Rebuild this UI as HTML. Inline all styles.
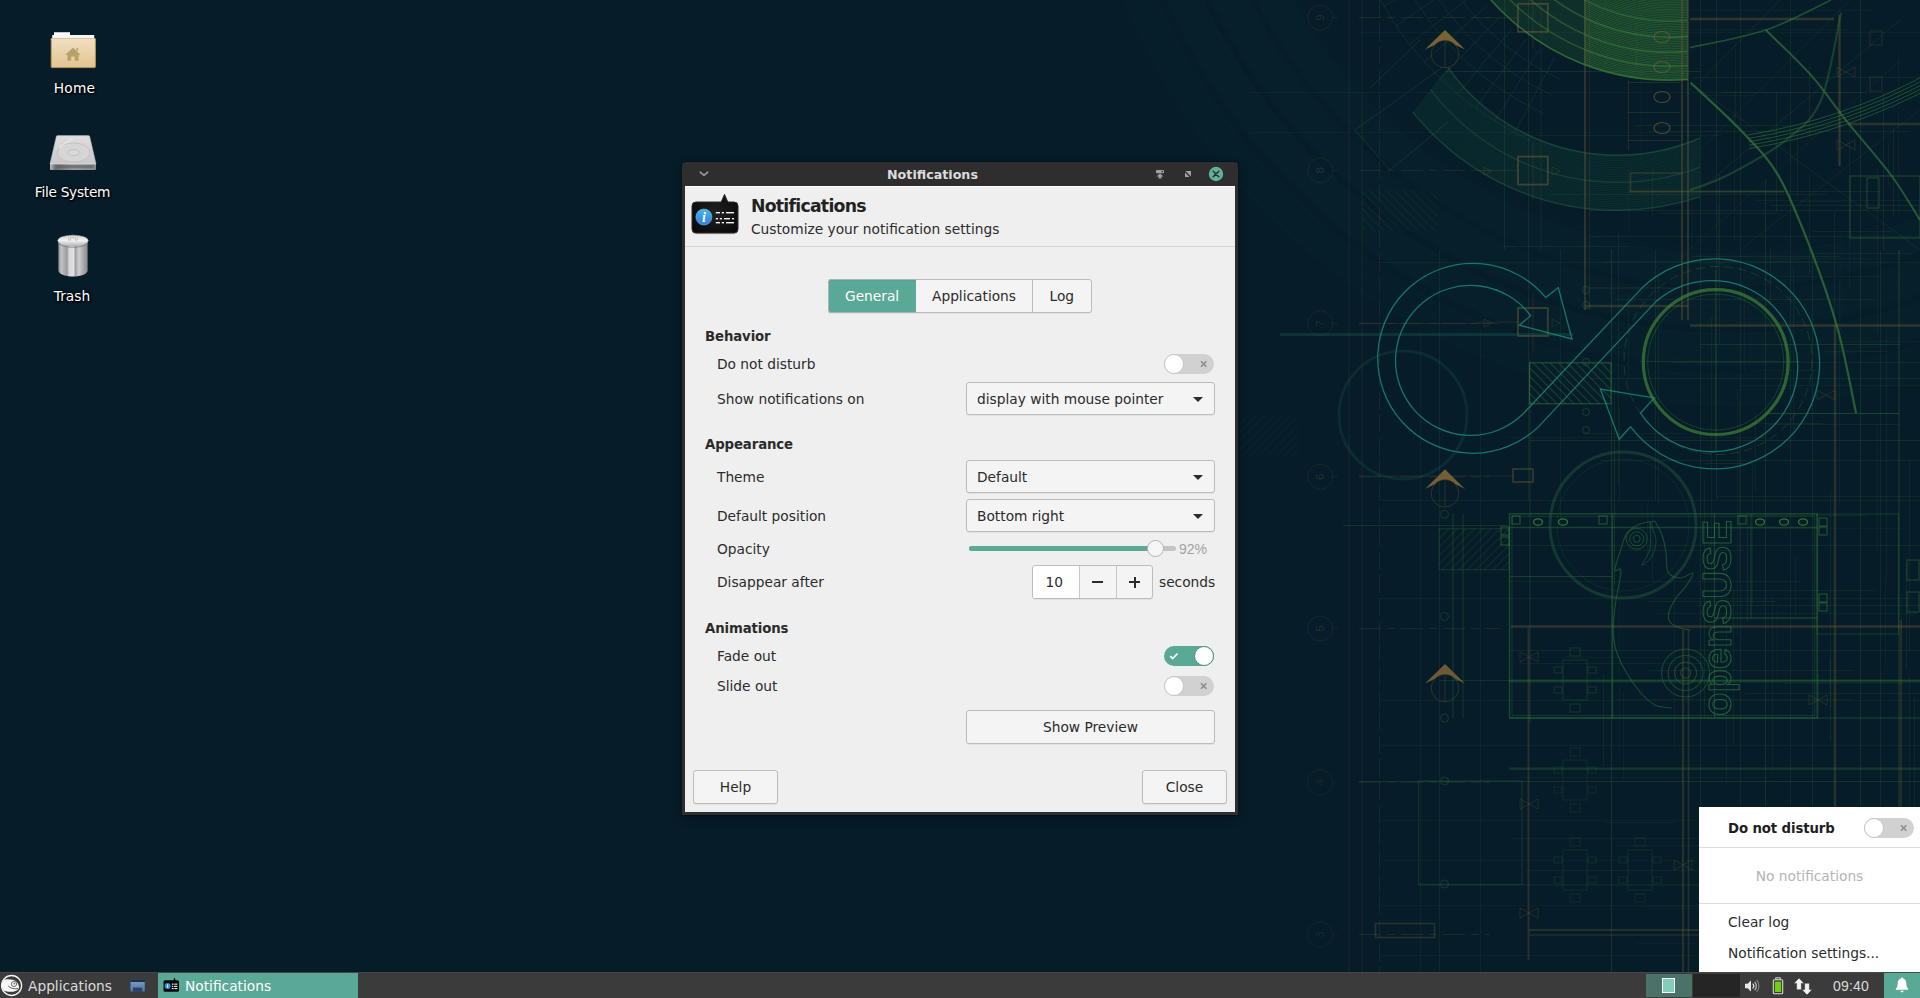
<!DOCTYPE html>
<html lang="en">
<head>
<meta charset="utf-8">
<title>Notifications</title>
<style>
*{box-sizing:border-box;margin:0;padding:0}
html,body{width:1920px;height:998px;overflow:hidden;background:#061c29}
body{position:relative;font-family:"DejaVu Sans","Liberation Sans",sans-serif;font-size:13.75px;color:#2b2b2b}
.a{position:absolute}
.t{position:absolute;white-space:nowrap;line-height:18px;height:18px}
.b{font-weight:bold;font-size:13.3px;letter-spacing:-.12px}
#wall{position:absolute;left:0;top:0;width:1920px;height:998px}
.dl{position:absolute;color:#fff;white-space:nowrap;text-align:center;width:160px;line-height:18px;text-shadow:0 1px 1px #000,1px 1px 2px #000,0 0 3px rgba(0,0,0,.8)}
/* window frame */
#frame{position:absolute;left:682px;top:162px;width:556px;height:653px;background:#2e2e2e;border-radius:4px 4px 0 0;box-shadow:0 0 0 1px rgba(0,0,0,.25),0 3px 10px rgba(0,0,0,.35)}
#wtitle{position:absolute;left:887px;top:166px;line-height:18px;color:#dcdcdc;font-weight:bold;font-size:12.7px;white-space:nowrap}
#content{position:absolute;left:685px;top:186px;width:550px;height:626px;background:#efefef;border-top:1px solid #fdfdfd}
.sep{position:absolute;height:1px;background:#d4d4d4}
.btn{position:absolute;border:1px solid #bcbcbc;border-radius:3px;background:#f4f4f4;box-shadow:0 1px 0 rgba(0,0,0,.05)}
.arr{position:absolute;width:0;height:0;border-left:5px solid transparent;border-right:5px solid transparent;border-top:5px solid #2b2b2b}
.sw{position:absolute;width:50px;height:20px;border-radius:10px;background:#d1d1d1}
.sw .k{position:absolute;left:0;top:0;width:20px;height:20px;border-radius:10px;background:#fff;border:1px solid #c6c6c6}
.sw.on{background:#5aa896}
.sw.on .k{left:30px;border-color:#4c927f}
.sw svg{position:absolute;top:0;left:0}
#panel{position:absolute;left:0;top:972px;width:1920px;height:26px;background:#3b3b3b;color:#dcdcdc}
#pop{position:absolute;left:1699px;top:807px;width:221px;height:165px;background:#fff}
</style>
</head>
<body>
<svg id="wall" style="filter:blur(.45px)" width="1920" height="998" viewBox="0 0 1920 998" fill="none">
<defs>
<clipPath id="cA"><rect x="1400" y="0" width="288" height="200"/></clipPath>
<clipPath id="cA2"><rect x="1584" y="0" width="104" height="200"/></clipPath>
<clipPath id="cB"><path d="M1383 150L1452 62L1700 62L1700 260L1480 260Z"/></clipPath>
<linearGradient id="fadeL" x1="0" y1="0" x2="1" y2="0"><stop offset="0" stop-color="#061c29" stop-opacity="1"/><stop offset="1" stop-color="#061c29" stop-opacity="0"/></linearGradient>
<linearGradient id="fadeB" x1="0" y1="0" x2="0" y2="1"><stop offset="0" stop-color="#061c29" stop-opacity="0"/><stop offset="1" stop-color="#061c29" stop-opacity=".55"/></linearGradient>
<pattern id="hat" width="6" height="6" patternUnits="userSpaceOnUse" patternTransform="rotate(45)"><path d="M0 0H6" stroke="#3d8038" stroke-width="1.4"/></pattern>
<pattern id="hat2" width="6" height="6" patternUnits="userSpaceOnUse" patternTransform="rotate(-45)"><path d="M0 0H6" stroke="#3d8038" stroke-width="1.4"/></pattern>
</defs>
<rect width="1920" height="998" fill="#061c29"/>
<circle cx="1730" cy="-250" r="520" stroke="#1f7a6a" stroke-opacity="0.035" stroke-width="34"/>
<circle cx="1730" cy="-250" r="560" stroke="#1f7a6a" stroke-opacity="0.04" stroke-width="34"/>
<circle cx="1730" cy="-250" r="600" stroke="#1f7a6a" stroke-opacity="0.03" stroke-width="34"/>
<circle cx="1730" cy="-250" r="640" stroke="#1f7a6a" stroke-opacity="0.02" stroke-width="34"/>
<circle cx="1730" cy="-250" r="500" stroke="#1f7a6a" stroke-opacity="0.05" stroke-width="1"/>
<circle cx="1730" cy="-250" r="514" stroke="#1f7a6a" stroke-opacity="0.05" stroke-width="1"/>
<circle cx="1730" cy="-250" r="528" stroke="#1f7a6a" stroke-opacity="0.05" stroke-width="1"/>
<circle cx="1730" cy="-250" r="542" stroke="#1f7a6a" stroke-opacity="0.05" stroke-width="1"/>
<circle cx="1730" cy="-250" r="556" stroke="#1f7a6a" stroke-opacity="0.05" stroke-width="1"/>
<circle cx="1730" cy="-250" r="570" stroke="#1f7a6a" stroke-opacity="0.05" stroke-width="1"/>
<circle cx="1730" cy="-250" r="584" stroke="#1f7a6a" stroke-opacity="0.05" stroke-width="1"/>
<circle cx="1730" cy="-250" r="598" stroke="#1f7a6a" stroke-opacity="0.05" stroke-width="1"/>
<circle cx="1730" cy="-250" r="612" stroke="#1f7a6a" stroke-opacity="0.05" stroke-width="1"/>
<circle cx="1730" cy="-250" r="626" stroke="#1f7a6a" stroke-opacity="0.05" stroke-width="1"/>
<circle cx="1730" cy="-250" r="640" stroke="#1f7a6a" stroke-opacity="0.05" stroke-width="1"/>
<circle cx="1730" cy="-250" r="654" stroke="#1f7a6a" stroke-opacity="0.05" stroke-width="1"/>
<g clip-path="url(#cA)">
<circle cx="1669.6" cy="-158.8" r="239" fill="#3d8038" fill-opacity=".13"/>
<circle cx="1669.6" cy="-158.8" r="160" stroke="#3d8038" stroke-opacity="0.176" stroke-width="0.8"/>
<circle cx="1669.6" cy="-158.8" r="161.7" stroke="#3d8038" stroke-opacity="0.176" stroke-width="0.8"/>
<circle cx="1669.6" cy="-158.8" r="163.4" stroke="#3d8038" stroke-opacity="0.176" stroke-width="0.8"/>
<circle cx="1669.6" cy="-158.8" r="165.1" stroke="#3d8038" stroke-opacity="0.176" stroke-width="0.8"/>
<circle cx="1669.6" cy="-158.8" r="166.8" stroke="#3d8038" stroke-opacity="0.176" stroke-width="0.8"/>
<circle cx="1669.6" cy="-158.8" r="168.5" stroke="#3d8038" stroke-opacity="0.176" stroke-width="0.8"/>
<circle cx="1669.6" cy="-158.8" r="170.2" stroke="#3d8038" stroke-opacity="0.176" stroke-width="0.8"/>
<circle cx="1669.6" cy="-158.8" r="171.9" stroke="#3d8038" stroke-opacity="0.176" stroke-width="0.8"/>
<circle cx="1669.6" cy="-158.8" r="173.6" stroke="#3d8038" stroke-opacity="0.176" stroke-width="0.8"/>
<circle cx="1669.6" cy="-158.8" r="175.3" stroke="#3d8038" stroke-opacity="0.176" stroke-width="0.8"/>
<circle cx="1669.6" cy="-158.8" r="177" stroke="#3d8038" stroke-opacity="0.176" stroke-width="0.8"/>
<circle cx="1669.6" cy="-158.8" r="178.7" stroke="#3d8038" stroke-opacity="0.176" stroke-width="0.8"/>
<circle cx="1669.6" cy="-158.8" r="180.4" stroke="#3d8038" stroke-opacity="0.176" stroke-width="0.8"/>
<circle cx="1669.6" cy="-158.8" r="182.1" stroke="#3d8038" stroke-opacity="0.176" stroke-width="0.8"/>
<circle cx="1669.6" cy="-158.8" r="183.8" stroke="#3d8038" stroke-opacity="0.176" stroke-width="0.8"/>
<circle cx="1669.6" cy="-158.8" r="185.5" stroke="#3d8038" stroke-opacity="0.176" stroke-width="0.8"/>
<circle cx="1669.6" cy="-158.8" r="187.2" stroke="#3d8038" stroke-opacity="0.176" stroke-width="0.8"/>
<circle cx="1669.6" cy="-158.8" r="188.9" stroke="#3d8038" stroke-opacity="0.176" stroke-width="0.8"/>
<circle cx="1669.6" cy="-158.8" r="190.6" stroke="#3d8038" stroke-opacity="0.176" stroke-width="0.8"/>
<circle cx="1669.6" cy="-158.8" r="192.3" stroke="#3d8038" stroke-opacity="0.176" stroke-width="0.8"/>
<circle cx="1669.6" cy="-158.8" r="194" stroke="#3d8038" stroke-opacity="0.176" stroke-width="0.8"/>
<circle cx="1669.6" cy="-158.8" r="195.7" stroke="#3d8038" stroke-opacity="0.176" stroke-width="0.8"/>
<circle cx="1669.6" cy="-158.8" r="197.4" stroke="#3d8038" stroke-opacity="0.176" stroke-width="0.8"/>
<circle cx="1669.6" cy="-158.8" r="199.1" stroke="#3d8038" stroke-opacity="0.176" stroke-width="0.8"/>
<circle cx="1669.6" cy="-158.8" r="200.8" stroke="#3d8038" stroke-opacity="0.176" stroke-width="0.8"/>
<circle cx="1669.6" cy="-158.8" r="202.5" stroke="#3d8038" stroke-opacity="0.176" stroke-width="0.8"/>
<circle cx="1669.6" cy="-158.8" r="204.2" stroke="#3d8038" stroke-opacity="0.176" stroke-width="0.8"/>
<circle cx="1669.6" cy="-158.8" r="205.9" stroke="#3d8038" stroke-opacity="0.176" stroke-width="0.8"/>
<circle cx="1669.6" cy="-158.8" r="207.6" stroke="#3d8038" stroke-opacity="0.176" stroke-width="0.8"/>
<circle cx="1669.6" cy="-158.8" r="209.3" stroke="#3d8038" stroke-opacity="0.176" stroke-width="0.8"/>
<circle cx="1669.6" cy="-158.8" r="211" stroke="#3d8038" stroke-opacity="0.176" stroke-width="0.8"/>
<circle cx="1669.6" cy="-158.8" r="212.7" stroke="#3d8038" stroke-opacity="0.176" stroke-width="0.8"/>
<circle cx="1669.6" cy="-158.8" r="214.4" stroke="#3d8038" stroke-opacity="0.176" stroke-width="0.8"/>
<circle cx="1669.6" cy="-158.8" r="216.1" stroke="#3d8038" stroke-opacity="0.176" stroke-width="0.8"/>
<circle cx="1669.6" cy="-158.8" r="217.8" stroke="#3d8038" stroke-opacity="0.176" stroke-width="0.8"/>
<circle cx="1669.6" cy="-158.8" r="219.5" stroke="#3d8038" stroke-opacity="0.176" stroke-width="0.8"/>
<circle cx="1669.6" cy="-158.8" r="221.2" stroke="#3d8038" stroke-opacity="0.176" stroke-width="0.8"/>
<circle cx="1669.6" cy="-158.8" r="222.9" stroke="#3d8038" stroke-opacity="0.176" stroke-width="0.8"/>
<circle cx="1669.6" cy="-158.8" r="224.6" stroke="#3d8038" stroke-opacity="0.176" stroke-width="0.8"/>
<circle cx="1669.6" cy="-158.8" r="226.3" stroke="#3d8038" stroke-opacity="0.176" stroke-width="0.8"/>
<circle cx="1669.6" cy="-158.8" r="228" stroke="#3d8038" stroke-opacity="0.176" stroke-width="0.8"/>
<circle cx="1669.6" cy="-158.8" r="229.7" stroke="#3d8038" stroke-opacity="0.176" stroke-width="0.8"/>
<circle cx="1669.6" cy="-158.8" r="231.4" stroke="#3d8038" stroke-opacity="0.176" stroke-width="0.8"/>
<circle cx="1669.6" cy="-158.8" r="233.1" stroke="#3d8038" stroke-opacity="0.176" stroke-width="0.8"/>
<circle cx="1669.6" cy="-158.8" r="234.8" stroke="#3d8038" stroke-opacity="0.176" stroke-width="0.8"/>
<circle cx="1669.6" cy="-158.8" r="236.5" stroke="#3d8038" stroke-opacity="0.176" stroke-width="0.8"/>
<circle cx="1669.6" cy="-158.8" r="238.2" stroke="#3d8038" stroke-opacity="0.176" stroke-width="0.8"/>
</g><g clip-path="url(#cA2)">
<circle cx="1669.6" cy="-158.8" r="239" fill="#3d8038" fill-opacity=".16"/>
<circle cx="1669.6" cy="-158.8" r="160" stroke="#4a9a3c" stroke-opacity="0.24" stroke-width="0.9"/>
<circle cx="1669.6" cy="-158.8" r="161.7" stroke="#4a9a3c" stroke-opacity="0.24" stroke-width="0.9"/>
<circle cx="1669.6" cy="-158.8" r="163.4" stroke="#4a9a3c" stroke-opacity="0.24" stroke-width="0.9"/>
<circle cx="1669.6" cy="-158.8" r="165.1" stroke="#4a9a3c" stroke-opacity="0.24" stroke-width="0.9"/>
<circle cx="1669.6" cy="-158.8" r="166.8" stroke="#4a9a3c" stroke-opacity="0.24" stroke-width="0.9"/>
<circle cx="1669.6" cy="-158.8" r="168.5" stroke="#4a9a3c" stroke-opacity="0.24" stroke-width="0.9"/>
<circle cx="1669.6" cy="-158.8" r="170.2" stroke="#4a9a3c" stroke-opacity="0.24" stroke-width="0.9"/>
<circle cx="1669.6" cy="-158.8" r="171.9" stroke="#4a9a3c" stroke-opacity="0.24" stroke-width="0.9"/>
<circle cx="1669.6" cy="-158.8" r="173.6" stroke="#4a9a3c" stroke-opacity="0.24" stroke-width="0.9"/>
<circle cx="1669.6" cy="-158.8" r="175.3" stroke="#4a9a3c" stroke-opacity="0.24" stroke-width="0.9"/>
<circle cx="1669.6" cy="-158.8" r="177" stroke="#4a9a3c" stroke-opacity="0.24" stroke-width="0.9"/>
<circle cx="1669.6" cy="-158.8" r="178.7" stroke="#4a9a3c" stroke-opacity="0.24" stroke-width="0.9"/>
<circle cx="1669.6" cy="-158.8" r="180.4" stroke="#4a9a3c" stroke-opacity="0.24" stroke-width="0.9"/>
<circle cx="1669.6" cy="-158.8" r="182.1" stroke="#4a9a3c" stroke-opacity="0.24" stroke-width="0.9"/>
<circle cx="1669.6" cy="-158.8" r="183.8" stroke="#4a9a3c" stroke-opacity="0.24" stroke-width="0.9"/>
<circle cx="1669.6" cy="-158.8" r="185.5" stroke="#4a9a3c" stroke-opacity="0.24" stroke-width="0.9"/>
<circle cx="1669.6" cy="-158.8" r="187.2" stroke="#4a9a3c" stroke-opacity="0.24" stroke-width="0.9"/>
<circle cx="1669.6" cy="-158.8" r="188.9" stroke="#4a9a3c" stroke-opacity="0.24" stroke-width="0.9"/>
<circle cx="1669.6" cy="-158.8" r="190.6" stroke="#4a9a3c" stroke-opacity="0.24" stroke-width="0.9"/>
<circle cx="1669.6" cy="-158.8" r="192.3" stroke="#4a9a3c" stroke-opacity="0.24" stroke-width="0.9"/>
<circle cx="1669.6" cy="-158.8" r="194" stroke="#4a9a3c" stroke-opacity="0.24" stroke-width="0.9"/>
<circle cx="1669.6" cy="-158.8" r="195.7" stroke="#4a9a3c" stroke-opacity="0.24" stroke-width="0.9"/>
<circle cx="1669.6" cy="-158.8" r="197.4" stroke="#4a9a3c" stroke-opacity="0.24" stroke-width="0.9"/>
<circle cx="1669.6" cy="-158.8" r="199.1" stroke="#4a9a3c" stroke-opacity="0.24" stroke-width="0.9"/>
<circle cx="1669.6" cy="-158.8" r="200.8" stroke="#4a9a3c" stroke-opacity="0.24" stroke-width="0.9"/>
<circle cx="1669.6" cy="-158.8" r="202.5" stroke="#4a9a3c" stroke-opacity="0.24" stroke-width="0.9"/>
<circle cx="1669.6" cy="-158.8" r="204.2" stroke="#4a9a3c" stroke-opacity="0.24" stroke-width="0.9"/>
<circle cx="1669.6" cy="-158.8" r="205.9" stroke="#4a9a3c" stroke-opacity="0.24" stroke-width="0.9"/>
<circle cx="1669.6" cy="-158.8" r="207.6" stroke="#4a9a3c" stroke-opacity="0.24" stroke-width="0.9"/>
<circle cx="1669.6" cy="-158.8" r="209.3" stroke="#4a9a3c" stroke-opacity="0.24" stroke-width="0.9"/>
<circle cx="1669.6" cy="-158.8" r="211" stroke="#4a9a3c" stroke-opacity="0.24" stroke-width="0.9"/>
<circle cx="1669.6" cy="-158.8" r="212.7" stroke="#4a9a3c" stroke-opacity="0.24" stroke-width="0.9"/>
<circle cx="1669.6" cy="-158.8" r="214.4" stroke="#4a9a3c" stroke-opacity="0.24" stroke-width="0.9"/>
<circle cx="1669.6" cy="-158.8" r="216.1" stroke="#4a9a3c" stroke-opacity="0.24" stroke-width="0.9"/>
<circle cx="1669.6" cy="-158.8" r="217.8" stroke="#4a9a3c" stroke-opacity="0.24" stroke-width="0.9"/>
<circle cx="1669.6" cy="-158.8" r="219.5" stroke="#4a9a3c" stroke-opacity="0.24" stroke-width="0.9"/>
<circle cx="1669.6" cy="-158.8" r="221.2" stroke="#4a9a3c" stroke-opacity="0.24" stroke-width="0.9"/>
<circle cx="1669.6" cy="-158.8" r="222.9" stroke="#4a9a3c" stroke-opacity="0.24" stroke-width="0.9"/>
<circle cx="1669.6" cy="-158.8" r="224.6" stroke="#4a9a3c" stroke-opacity="0.24" stroke-width="0.9"/>
<circle cx="1669.6" cy="-158.8" r="226.3" stroke="#4a9a3c" stroke-opacity="0.24" stroke-width="0.9"/>
<circle cx="1669.6" cy="-158.8" r="228" stroke="#4a9a3c" stroke-opacity="0.24" stroke-width="0.9"/>
<circle cx="1669.6" cy="-158.8" r="229.7" stroke="#4a9a3c" stroke-opacity="0.24" stroke-width="0.9"/>
<circle cx="1669.6" cy="-158.8" r="231.4" stroke="#4a9a3c" stroke-opacity="0.24" stroke-width="0.9"/>
<circle cx="1669.6" cy="-158.8" r="233.1" stroke="#4a9a3c" stroke-opacity="0.24" stroke-width="0.9"/>
<circle cx="1669.6" cy="-158.8" r="234.8" stroke="#4a9a3c" stroke-opacity="0.24" stroke-width="0.9"/>
<circle cx="1669.6" cy="-158.8" r="236.5" stroke="#4a9a3c" stroke-opacity="0.24" stroke-width="0.9"/>
<circle cx="1669.6" cy="-158.8" r="238.2" stroke="#4a9a3c" stroke-opacity="0.24" stroke-width="0.9"/>
</g>
<g clip-path="url(#cA)">
<circle cx="1669.6" cy="-158.8" r="239" stroke="#479a3c" stroke-opacity="0.6" stroke-width="1.6"/>
<circle cx="1669.6" cy="-158.8" r="225" stroke="#479a3c" stroke-opacity="0.36" stroke-width="1.6"/>
<circle cx="1669.6" cy="-158.8" r="211" stroke="#479a3c" stroke-opacity="0.36" stroke-width="1.6"/>
<circle cx="1669.6" cy="-158.8" r="196" stroke="#479a3c" stroke-opacity="0.4" stroke-width="1.6"/>
<circle cx="1669.6" cy="-158.8" r="180" stroke="#479a3c" stroke-opacity="0.32" stroke-width="1.6"/>
</g>
<g clip-path="url(#cB)">
<path d="M1355.2 -51.7a262 262 0 0 0 524 0h-55a207 207 0 0 1 -414 0z" fill="#2f7448" fill-opacity=".07"/>
<circle cx="1617.2" cy="-51.7" r="207" stroke="#2f7448" stroke-opacity="0.2" stroke-width="0.8"/>
<circle cx="1617.2" cy="-51.7" r="208.8" stroke="#2f7448" stroke-opacity="0.2" stroke-width="0.8"/>
<circle cx="1617.2" cy="-51.7" r="210.6" stroke="#2f7448" stroke-opacity="0.2" stroke-width="0.8"/>
<circle cx="1617.2" cy="-51.7" r="212.4" stroke="#2f7448" stroke-opacity="0.2" stroke-width="0.8"/>
<circle cx="1617.2" cy="-51.7" r="214.2" stroke="#2f7448" stroke-opacity="0.2" stroke-width="0.8"/>
<circle cx="1617.2" cy="-51.7" r="216" stroke="#2f7448" stroke-opacity="0.2" stroke-width="0.8"/>
<circle cx="1617.2" cy="-51.7" r="217.8" stroke="#2f7448" stroke-opacity="0.2" stroke-width="0.8"/>
<circle cx="1617.2" cy="-51.7" r="219.6" stroke="#2f7448" stroke-opacity="0.2" stroke-width="0.8"/>
<circle cx="1617.2" cy="-51.7" r="221.4" stroke="#2f7448" stroke-opacity="0.2" stroke-width="0.8"/>
<circle cx="1617.2" cy="-51.7" r="223.2" stroke="#2f7448" stroke-opacity="0.2" stroke-width="0.8"/>
<circle cx="1617.2" cy="-51.7" r="225" stroke="#2f7448" stroke-opacity="0.2" stroke-width="0.8"/>
<circle cx="1617.2" cy="-51.7" r="226.8" stroke="#2f7448" stroke-opacity="0.2" stroke-width="0.8"/>
<circle cx="1617.2" cy="-51.7" r="228.6" stroke="#2f7448" stroke-opacity="0.2" stroke-width="0.8"/>
<circle cx="1617.2" cy="-51.7" r="230.4" stroke="#2f7448" stroke-opacity="0.2" stroke-width="0.8"/>
<circle cx="1617.2" cy="-51.7" r="232.2" stroke="#2f7448" stroke-opacity="0.2" stroke-width="0.8"/>
<circle cx="1617.2" cy="-51.7" r="234" stroke="#2f7448" stroke-opacity="0.2" stroke-width="0.8"/>
<circle cx="1617.2" cy="-51.7" r="235.8" stroke="#2f7448" stroke-opacity="0.2" stroke-width="0.8"/>
<circle cx="1617.2" cy="-51.7" r="237.6" stroke="#2f7448" stroke-opacity="0.2" stroke-width="0.8"/>
<circle cx="1617.2" cy="-51.7" r="239.4" stroke="#2f7448" stroke-opacity="0.2" stroke-width="0.8"/>
<circle cx="1617.2" cy="-51.7" r="241.2" stroke="#2f7448" stroke-opacity="0.2" stroke-width="0.8"/>
<circle cx="1617.2" cy="-51.7" r="243" stroke="#2f7448" stroke-opacity="0.2" stroke-width="0.8"/>
<circle cx="1617.2" cy="-51.7" r="244.8" stroke="#2f7448" stroke-opacity="0.2" stroke-width="0.8"/>
<circle cx="1617.2" cy="-51.7" r="246.6" stroke="#2f7448" stroke-opacity="0.2" stroke-width="0.8"/>
<circle cx="1617.2" cy="-51.7" r="248.4" stroke="#2f7448" stroke-opacity="0.2" stroke-width="0.8"/>
<circle cx="1617.2" cy="-51.7" r="250.2" stroke="#2f7448" stroke-opacity="0.2" stroke-width="0.8"/>
<circle cx="1617.2" cy="-51.7" r="252" stroke="#2f7448" stroke-opacity="0.2" stroke-width="0.8"/>
<circle cx="1617.2" cy="-51.7" r="253.8" stroke="#2f7448" stroke-opacity="0.2" stroke-width="0.8"/>
<circle cx="1617.2" cy="-51.7" r="255.6" stroke="#2f7448" stroke-opacity="0.2" stroke-width="0.8"/>
<circle cx="1617.2" cy="-51.7" r="257.4" stroke="#2f7448" stroke-opacity="0.2" stroke-width="0.8"/>
<circle cx="1617.2" cy="-51.7" r="259.2" stroke="#2f7448" stroke-opacity="0.2" stroke-width="0.8"/>
<circle cx="1617.2" cy="-51.7" r="261" stroke="#2f7448" stroke-opacity="0.2" stroke-width="0.8"/>
<circle cx="1617.2" cy="-51.7" r="207" stroke="#2f7448" stroke-opacity="0.4" stroke-width="1.4"/>
<circle cx="1617.2" cy="-51.7" r="262" stroke="#2f7448" stroke-opacity="0.4" stroke-width="1.4"/>
<circle cx="1617.2" cy="-51.7" r="234" stroke="#2f7448" stroke-opacity="0.3" stroke-width="1.4"/>
</g>
<circle cx="1320.2" cy="17.5" r="12.5" stroke="#6f5c34" stroke-opacity="0.186" stroke-width="1"/>
<text x="1320.2" y="17.5" transform="rotate(-90 1320.2 17.5)" text-anchor="middle" dy="4" font-family="Liberation Sans,DejaVu Sans,sans-serif" font-size="11.500" fill="#6f5c34" fill-opacity="0.3">9</text>
<path d="M1333 17.5L1338 17.5" stroke="#6f5c34" stroke-opacity="0.186" stroke-width="1"/>
<path d="M1359 17.5L1490 17.5" stroke="#6f5c34" stroke-opacity="0.236" stroke-width="1" stroke-dasharray="22 6 8 6"/>
<circle cx="1320.2" cy="170.4" r="12.5" stroke="#6f5c34" stroke-opacity="0.186" stroke-width="1"/>
<text x="1320.2" y="170.4" transform="rotate(-90 1320.2 170.4)" text-anchor="middle" dy="4" font-family="Liberation Sans,DejaVu Sans,sans-serif" font-size="11.500" fill="#6f5c34" fill-opacity="0.3">8</text>
<path d="M1333 170.4L1338 170.4" stroke="#6f5c34" stroke-opacity="0.186" stroke-width="1"/>
<path d="M1359 170.4L1490 170.4" stroke="#6f5c34" stroke-opacity="0.236" stroke-width="1" stroke-dasharray="22 6 8 6"/>
<circle cx="1320.2" cy="323.2" r="12.5" stroke="#6f5c34" stroke-opacity="0.186" stroke-width="1"/>
<text x="1320.2" y="323.2" transform="rotate(-90 1320.2 323.2)" text-anchor="middle" dy="4" font-family="Liberation Sans,DejaVu Sans,sans-serif" font-size="11.500" fill="#6f5c34" fill-opacity="0.3">7</text>
<path d="M1333 323.2L1338 323.2" stroke="#6f5c34" stroke-opacity="0.186" stroke-width="1"/>
<path d="M1359 323.2L1490 323.2" stroke="#6f5c34" stroke-opacity="0.236" stroke-width="1" stroke-dasharray="22 6 8 6"/>
<circle cx="1320.2" cy="476.8" r="12.5" stroke="#6f5c34" stroke-opacity="0.186" stroke-width="1"/>
<text x="1320.2" y="476.8" transform="rotate(-90 1320.2 476.8)" text-anchor="middle" dy="4" font-family="Liberation Sans,DejaVu Sans,sans-serif" font-size="11.500" fill="#6f5c34" fill-opacity="0.3">6</text>
<path d="M1333 476.8L1338 476.8" stroke="#6f5c34" stroke-opacity="0.186" stroke-width="1"/>
<path d="M1359 476.8L1490 476.8" stroke="#6f5c34" stroke-opacity="0.236" stroke-width="1" stroke-dasharray="22 6 8 6"/>
<circle cx="1320.2" cy="628.6" r="12.5" stroke="#6f5c34" stroke-opacity="0.186" stroke-width="1"/>
<text x="1320.2" y="628.6" transform="rotate(-90 1320.2 628.6)" text-anchor="middle" dy="4" font-family="Liberation Sans,DejaVu Sans,sans-serif" font-size="11.500" fill="#6f5c34" fill-opacity="0.3">5</text>
<path d="M1333 628.6L1338 628.6" stroke="#6f5c34" stroke-opacity="0.186" stroke-width="1"/>
<path d="M1359 628.6L1500 628.6" stroke="#6f5c34" stroke-opacity="0.236" stroke-width="1" stroke-dasharray="22 6 8 6"/>
<circle cx="1320.2" cy="782.2" r="12.5" stroke="#6f5c34" stroke-opacity="0.136" stroke-width="1"/>
<text x="1320.2" y="782.2" transform="rotate(-90 1320.2 782.2)" text-anchor="middle" dy="4" font-family="Liberation Sans,DejaVu Sans,sans-serif" font-size="11.500" fill="#6f5c34" fill-opacity="0.22">4</text>
<path d="M1333 782.2L1338 782.2" stroke="#6f5c34" stroke-opacity="0.136" stroke-width="1"/>
<path d="M1359 782.2L1490 782.2" stroke="#6f5c34" stroke-opacity="0.236" stroke-width="1" stroke-dasharray="22 6 8 6"/>
<circle cx="1320.2" cy="934.5" r="12.5" stroke="#6f5c34" stroke-opacity="0.136" stroke-width="1"/>
<text x="1320.2" y="934.5" transform="rotate(-90 1320.2 934.5)" text-anchor="middle" dy="4" font-family="Liberation Sans,DejaVu Sans,sans-serif" font-size="11.500" fill="#6f5c34" fill-opacity="0.22">3</text>
<path d="M1333 934.5L1338 934.5" stroke="#6f5c34" stroke-opacity="0.136" stroke-width="1"/>
<path d="M1359 934.5L1490 934.5" stroke="#6f5c34" stroke-opacity="0.236" stroke-width="1" stroke-dasharray="22 6 8 6"/>
<path d="M1349 0L1349 972" stroke="#6f5c34" stroke-opacity="0.186" stroke-width="1"/>
<path d="M1362 0L1362 972" stroke="#6f5c34" stroke-opacity="0.198" stroke-width="1"/>
<path d="M1379.5 0L1379.5 972" stroke="#6f5c34" stroke-opacity="0.174" stroke-width="1" stroke-dasharray="18 5"/>
<path d="M1439.5 250L1439.5 972" stroke="#2a6a45" stroke-opacity="0.2" stroke-width="1"/>
<path d="M1445 30L1465 49.6L1455.5 45A13.800 13.800 0 0 0 1434.5 45L1425 49.6Z" fill="#9a743a" fill-opacity="0.8"/>
<circle cx="1445" cy="54" r="13.8" stroke="#6f5c34" stroke-opacity="0.372" stroke-width="1"/>
<path d="M1445 41L1445 68" stroke="#6f5c34" stroke-opacity="0.31" stroke-width="1"/>
<path d="M1445 469.3L1465 488.9L1455.5 484.3A13.800 13.800 0 0 0 1434.5 484.3L1425 488.9Z" fill="#9a743a" fill-opacity="0.75"/>
<circle cx="1445" cy="493.3" r="13.8" stroke="#6f5c34" stroke-opacity="0.372" stroke-width="1"/>
<path d="M1445 480.3L1445 507.3" stroke="#6f5c34" stroke-opacity="0.31" stroke-width="1"/>
<path d="M1445 664L1465 683.6L1455.5 679A13.800 13.800 0 0 0 1434.5 679L1425 683.6Z" fill="#9a743a" fill-opacity="0.7"/>
<circle cx="1445" cy="688" r="13.8" stroke="#6f5c34" stroke-opacity="0.372" stroke-width="1"/>
<path d="M1445 675L1445 702" stroke="#6f5c34" stroke-opacity="0.31" stroke-width="1"/>
<path d="M1445 71.5L1700 71.5" stroke="#2a6a45" stroke-opacity="0.28" stroke-width="1"/>
<rect x="1518" y="3.8" width="29.8" height="28" fill="none" stroke="#7a6436" stroke-opacity="0.465" stroke-width="1.8"/>
<path d="M1478 17.8L1518 17.8" stroke="#6f5c34" stroke-opacity="0.248" stroke-width="1"/>
<path d="M1533 -10.2L1533 47.8" stroke="#6f5c34" stroke-opacity="0.248" stroke-width="1"/>
<rect x="1518" y="156.6" width="29.8" height="28" fill="none" stroke="#7a6436" stroke-opacity="0.465" stroke-width="1.8"/>
<path d="M1478 170.6L1518 170.6" stroke="#6f5c34" stroke-opacity="0.248" stroke-width="1"/>
<path d="M1533 142.6L1533 200.6" stroke="#6f5c34" stroke-opacity="0.248" stroke-width="1"/>
<rect x="1518" y="308" width="29.8" height="28" fill="none" stroke="#7a6436" stroke-opacity="0.465" stroke-width="1.8"/>
<path d="M1478 322L1518 322" stroke="#6f5c34" stroke-opacity="0.248" stroke-width="1"/>
<path d="M1533 294L1533 352" stroke="#6f5c34" stroke-opacity="0.248" stroke-width="1"/>
<rect x="1513" y="469" width="20" height="13" fill="none" stroke="#7a6436" stroke-opacity="0.434" stroke-width="1.6"/>
<path d="M1528.5 0L1528.5 500" stroke="#6f5c34" stroke-opacity="0.186" stroke-width="1"/>
<path d="M1541 0L1541 250" stroke="#6f5c34" stroke-opacity="0.186" stroke-width="1"/>
<path d="M1585 0L1585 310" stroke="#6f5c34" stroke-opacity="0.384" stroke-width="2"/>
<path d="M1589.5 0L1589.5 310" stroke="#6f5c34" stroke-opacity="0.217" stroke-width="1"/>
<path d="M1682 0L1682 320" stroke="#6f5c34" stroke-opacity="0.384" stroke-width="2"/>
<path d="M1688 0L1688 320" stroke="#6f5c34" stroke-opacity="0.384" stroke-width="2"/>
<path d="M1690 19L1834 19" stroke="#6f5c34" stroke-opacity="0.403" stroke-width="2.4"/>
<path d="M1839.5 15L1839.5 166" stroke="#6f5c34" stroke-opacity="0.403" stroke-width="2.4"/>
<path d="M1848 124L1920 124" stroke="#6f5c34" stroke-opacity="0.372" stroke-width="2.4"/>
<path d="M1630 173L1681 173" stroke="#6f5c34" stroke-opacity="0.341" stroke-width="1.6"/>
<path d="M1630 191.5L1784 191.5" stroke="#6f5c34" stroke-opacity="0.372" stroke-width="2"/>
<path d="M1630.5 173L1630.5 192" stroke="#6f5c34" stroke-opacity="0.341" stroke-width="1.6"/>
<path d="M1585 306L1688 306" stroke="#6f5c34" stroke-opacity="0.372" stroke-width="2.4"/>
<path d="M1590 288L1680 288" stroke="#6f5c34" stroke-opacity="0.248" stroke-width="1.2"/>
<path d="M1690 325.5L1920 325.5" stroke="#6f5c34" stroke-opacity="0.384" stroke-width="2.4"/>
<path d="M1835 325L1835 972" stroke="#6f5c34" stroke-opacity="0.341" stroke-width="2.4"/>
<path d="M1511 626.5L1920 626.5" stroke="#6f5c34" stroke-opacity="0.384" stroke-width="2.4"/>
<path d="M1528.5 628L1528.5 960" stroke="#6f5c34" stroke-opacity="0.31" stroke-width="2"/>
<path d="M1683 630L1683 972" stroke="#6f5c34" stroke-opacity="0.341" stroke-width="2"/>
<path d="M1688.5 630L1688.5 972" stroke="#6f5c34" stroke-opacity="0.31" stroke-width="1.6"/>
<path d="M1901 620L1901 972" stroke="#6f5c34" stroke-opacity="0.279" stroke-width="2"/>
<path d="M1529 930L1699 930" stroke="#6f5c34" stroke-opacity="0.31" stroke-width="2"/>
<path d="M1529 935L1699 935" stroke="#6f5c34" stroke-opacity="0.279" stroke-width="1.6"/>
<rect x="1375.5" y="923.5" width="59" height="14" fill="none" stroke="#7a6436" stroke-opacity="0.31" stroke-width="1.6"/>
<path d="M1628 82.5L1680 82.5" stroke="#6f5c34" stroke-opacity="0.279" stroke-width="1"/>
<path d="M1628 112.5L1680 112.5" stroke="#6f5c34" stroke-opacity="0.279" stroke-width="1"/>
<path d="M1628 140.5L1680 140.5" stroke="#6f5c34" stroke-opacity="0.279" stroke-width="1"/>
<path d="M1628.5 80L1628.5 150" stroke="#6f5c34" stroke-opacity="0.279" stroke-width="1"/>
<path d="M1504.5 0L1504.5 250" stroke="#3d8038" stroke-opacity="0.176" stroke-width="1"/>
<path d="M1611.5 250L1611.5 972" stroke="#3d8038" stroke-opacity="0.24" stroke-width="1"/>
<path d="M1530 360L1530 722" stroke="#3d8038" stroke-opacity="0.28" stroke-width="1"/>
<path d="M1700.5 0L1700.5 972" stroke="#3d8038" stroke-opacity="0.16" stroke-width="1"/>
<path d="M1716.5 0L1716.5 500" stroke="#3d8038" stroke-opacity="0.176" stroke-width="1"/>
<path d="M1740.5 0L1740.5 972" stroke="#3d8038" stroke-opacity="0.144" stroke-width="1"/>
<path d="M1765.5 180L1765.5 972" stroke="#3d8038" stroke-opacity="0.2" stroke-width="1"/>
<path d="M1790.5 0L1790.5 972" stroke="#3d8038" stroke-opacity="0.16" stroke-width="1"/>
<path d="M1812.5 250L1812.5 972" stroke="#3d8038" stroke-opacity="0.176" stroke-width="1"/>
<path d="M1860.5 0L1860.5 972" stroke="#3d8038" stroke-opacity="0.2" stroke-width="1"/>
<path d="M1880.5 250L1880.5 972" stroke="#3d8038" stroke-opacity="0.16" stroke-width="1"/>
<path d="M1899 250L1899 972" stroke="#3d8038" stroke-opacity="0.4" stroke-width="1"/>
<path d="M1453 514L1453 718" stroke="#3d8038" stroke-opacity="0.32" stroke-width="1"/>
<path d="M1463 514L1463 718" stroke="#3d8038" stroke-opacity="0.28" stroke-width="1"/>
<path d="M1655.5 250L1655.5 500" stroke="#3d8038" stroke-opacity="0.16" stroke-width="1"/>
<path d="M1560.5 250L1560.5 520" stroke="#3d8038" stroke-opacity="0.12" stroke-width="1"/>
<path d="M1480.5 330L1480.5 972" stroke="#3d8038" stroke-opacity="0.12" stroke-width="1"/>
<path d="M1420.5 330L1420.5 972" stroke="#3d8038" stroke-opacity="0.096" stroke-width="1"/>
<path d="M1360 32.5L1920 32.5" stroke="#3d8038" stroke-opacity="0.096" stroke-width="1"/>
<path d="M1250 92.5L1920 92.5" stroke="#3d8038" stroke-opacity="0.096" stroke-width="1"/>
<path d="M1250 132.5L1700 132.5" stroke="#3d8038" stroke-opacity="0.08" stroke-width="1"/>
<path d="M1590 210.5L1920 210.5" stroke="#3d8038" stroke-opacity="0.16" stroke-width="1"/>
<path d="M1590 236.5L1920 236.5" stroke="#3d8038" stroke-opacity="0.144" stroke-width="1"/>
<path d="M1380 262.5L1920 262.5" stroke="#3d8038" stroke-opacity="0.12" stroke-width="1"/>
<path d="M1700 344.5L1900 344.5" stroke="#3d8038" stroke-opacity="0.24" stroke-width="1"/>
<path d="M1590 378.5L1920 378.5" stroke="#3d8038" stroke-opacity="0.16" stroke-width="1"/>
<path d="M1766 413.5L1899 413.5" stroke="#3d8038" stroke-opacity="0.4" stroke-width="1"/>
<path d="M1530 440.5L1920 440.5" stroke="#3d8038" stroke-opacity="0.2" stroke-width="1"/>
<path d="M1600 460.5L1920 460.5" stroke="#3d8038" stroke-opacity="0.144" stroke-width="1"/>
<path d="M1380 500.5L1920 500.5" stroke="#3d8038" stroke-opacity="0.12" stroke-width="1"/>
<path d="M1343 525.5L1508 525.5" stroke="#3d8038" stroke-opacity="0.24" stroke-width="1"/>
<path d="M1509 545.5L1920 545.5" stroke="#3d8038" stroke-opacity="0.16" stroke-width="1"/>
<path d="M1510 576.5L1612 576.5" stroke="#3d8038" stroke-opacity="0.32" stroke-width="1"/>
<path d="M1380 598.5L1920 598.5" stroke="#3d8038" stroke-opacity="0.12" stroke-width="1"/>
<path d="M1509 650.5L1920 650.5" stroke="#3d8038" stroke-opacity="0.144" stroke-width="1"/>
<path d="M1440 680.5L1920 680.5" stroke="#3d8038" stroke-opacity="0.24" stroke-width="1"/>
<path d="M1380 700.5L1920 700.5" stroke="#3d8038" stroke-opacity="0.096" stroke-width="1"/>
<path d="M1380 745.5L1920 745.5" stroke="#3d8038" stroke-opacity="0.112" stroke-width="1"/>
<path d="M1510 769L1920 769" stroke="#3d8038" stroke-opacity="0.256" stroke-width="1"/>
<path d="M1359 781.5L1920 781.5" stroke="#3d8038" stroke-opacity="0.24" stroke-width="1"/>
<path d="M1380 820.5L1920 820.5" stroke="#3d8038" stroke-opacity="0.08" stroke-width="1"/>
<path d="M1380 860.5L1920 860.5" stroke="#3d8038" stroke-opacity="0.08" stroke-width="1"/>
<path d="M1418 885L1920 885" stroke="#3d8038" stroke-opacity="0.24" stroke-width="1"/>
<path d="M1380 905.5L1700 905.5" stroke="#3d8038" stroke-opacity="0.08" stroke-width="1"/>
<path d="M1380 955.5L1700 955.5" stroke="#3d8038" stroke-opacity="0.096" stroke-width="1"/>
<path d="M1280 334.5L1573 334.5" stroke="#1f6a5a" stroke-opacity="0.3" stroke-width="3"/>
<path d="M1359 323.5L1500 323.5" stroke="#6f5c34" stroke-opacity="0.217" stroke-width="1"/>
<path d="M1359 476L1515 476" stroke="#6f5c34" stroke-opacity="0.217" stroke-width="1"/>
<rect x="1529.500" y="362.800" width="81.500" height="41" fill="url(#hat)" fill-opacity=".55" stroke="#3d8038" stroke-opacity=".6"/>
<rect x="1439" y="528.800" width="70" height="41" fill="url(#hat2)" fill-opacity=".28" stroke="#3d8038" stroke-opacity=".3"/>
<rect x="1362" y="190.500" width="76" height="40" fill="url(#hat)" fill-opacity=".18"/>
<rect x="1240" y="415" width="60" height="40" fill="url(#hat2)" fill-opacity=".1"/>
<path d="M1690.6 82.7C1699 90.6 1726.2 114.9 1740.8 130.3C1755.4 145.8 1766.6 155.5 1778.3 175.4C1790 195.3 1801 224.2 1811 250C1821 275.8 1830.5 302.8 1838 330C1845.5 357.2 1853 399.2 1856 413" stroke="#3f8a3a" stroke-opacity="0.6" stroke-width="2.2" fill="none"/>
<path d="M1690 47.6C1702.6 44.7 1742.3 37.9 1765.8 30C1789.3 22.1 1820.1 5 1831 0" stroke="#3f8a3a" stroke-opacity="0.48" stroke-width="1.6" fill="none"/>
<path d="M1765.8 30C1773.3 37.5 1797.6 60.2 1811 75.2C1824.4 90.2 1832.7 103.7 1846 120.3C1859.3 136.9 1878.7 158.4 1891 175C1903.3 191.6 1915.2 212.5 1920 220" stroke="#3f8a3a" stroke-opacity="0.56" stroke-width="2" fill="none"/>
<path d="M1841 12.5C1837.7 27.1 1830.2 78.8 1821 100C1811.8 121.2 1801.5 127.5 1786 140C1770.5 152.5 1744 166.7 1728 175C1712 183.3 1696.3 187.5 1690 190" stroke="#2f6a3a" stroke-opacity="0.468" stroke-width="2.2" fill="none"/>
<path d="M1747.5 135.1A574.5 574.5 0 0 0 1929.7 72.9" stroke="#3f8a3a" stroke-opacity="0.48" stroke-width="1" fill="none"/>
<path d="M1748 138.5A577.9 577.9 0 0 0 1931.4 75.9" stroke="#3f8a3a" stroke-opacity="0.48" stroke-width="1" fill="none"/>
<path d="M1748.5 141.8A581.3 581.3 0 0 0 1933 78.9" stroke="#3f8a3a" stroke-opacity="0.48" stroke-width="1" fill="none"/>
<path d="M1749.1 145.2A584.7 584.7 0 0 0 1934.6 81.8" stroke="#3f8a3a" stroke-opacity="0.48" stroke-width="1" fill="none"/>
<path d="M1749.6 148.5A588.1 588.1 0 0 0 1936.2 84.8" stroke="#3f8a3a" stroke-opacity="0.48" stroke-width="1" fill="none"/>
<path d="M1932.1 88.1L1956.1 133.1" stroke="#3f8a3a" stroke-opacity="0.36" stroke-width="1"/>
<path d="M1942.1 82.7L1966.9 127.2" stroke="#3f8a3a" stroke-opacity="0.36" stroke-width="1"/>
<path d="M1951.9 77.1L1977.5 121.1" stroke="#3f8a3a" stroke-opacity="0.36" stroke-width="1"/>
<path d="M1961.6 71.3L1988.1 114.9" stroke="#3f8a3a" stroke-opacity="0.36" stroke-width="1"/>
<path d="M1971.2 65.3L1998.5 108.4" stroke="#3f8a3a" stroke-opacity="0.36" stroke-width="1"/>
<path d="M1980.7 59.2L2008.8 101.7" stroke="#3f8a3a" stroke-opacity="0.36" stroke-width="1"/>
<path d="M1990.1 52.8L2019 94.8" stroke="#3f8a3a" stroke-opacity="0.36" stroke-width="1"/>
<path d="M1999.3 46.3L2029.1 87.7" stroke="#3f8a3a" stroke-opacity="0.36" stroke-width="1"/>
<path d="M1355 130L1443 67M1355 130L1390 170L1448 122M1370 88L1420 40" stroke="#2a6a45" stroke-opacity="0.32" stroke-width="1" fill="none"/>
<path d="M1554.6 57.5L1514.7 132.6" stroke="#2a6a45" stroke-opacity="0.24" stroke-width="1"/>
<path d="M1539.8 49L1494.7 121.1" stroke="#2a6a45" stroke-opacity="0.24" stroke-width="1"/>
<path d="M1525.6 39.4L1475.6 108.2" stroke="#2a6a45" stroke-opacity="0.24" stroke-width="1"/>
<path d="M1512.1 28.9L1457.5 94" stroke="#2a6a45" stroke-opacity="0.24" stroke-width="1"/>
<path d="M1499.4 17.4L1440.4 78.6" stroke="#2a6a45" stroke-opacity="0.24" stroke-width="1"/>
<path d="M1487.5 5.1L1424.4 62" stroke="#2a6a45" stroke-opacity="0.24" stroke-width="1"/>
<path d="M1476.5 -8L1409.6 44.4" stroke="#2a6a45" stroke-opacity="0.24" stroke-width="1"/>
<path d="M1466.5 -21.8L1396 25.7" stroke="#2a6a45" stroke-opacity="0.24" stroke-width="1"/>
<path d="M1457.4 -36.3L1383.8 6.2" stroke="#2a6a45" stroke-opacity="0.24" stroke-width="1"/>
<path d="M1558.9 78.7A262 262 0 0 1 1438.3 -35.8" stroke="#2a6a45" stroke-opacity="0.224" stroke-width="1" fill="none"/>
<path d="M1551.3 95A280 280 0 0 1 1422.4 -27.3" stroke="#2a6a45" stroke-opacity="0.224" stroke-width="1" fill="none"/>
<path d="M1542.8 113.1A300 300 0 0 1 1404.7 -18" stroke="#2a6a45" stroke-opacity="0.224" stroke-width="1" fill="none"/>
<path d="M1530.1 140.3A330 330 0 0 1 1378.2 -3.9" stroke="#2a6a45" stroke-opacity="0.224" stroke-width="1" fill="none"/>
<path d="M1545.800 297.600A95 95 0 1 0 1537.900 427.400L1655.900 301.600A85.600 85.600 0 1 1 1640.500 413L1654.300 397.900L1600.400 389L1619.200 439.200L1630.500 426.700A105 105 0 1 0 1642.100 287.900L1523.200 413.800A75 75 0 1 1 1530.700 315.700L1519.400 325.200L1572 339L1558.300 287.600Z" stroke="#1d8c7c" stroke-opacity="0.8" stroke-width="1.3" fill="none"/>
<circle cx="1715.7" cy="362.1" r="72.4" stroke="#3f7f36" stroke-opacity="0.722" stroke-width="3.2"/>
<circle cx="1715.7" cy="362.1" r="68" stroke="#3f7f36" stroke-opacity="0.34" stroke-width="1"/>
<circle cx="1718" cy="360.5" r="94" stroke="#3f8a3a" stroke-opacity="0.28" stroke-width="1" stroke-dasharray="9 5"/>
<path d="M1640 361.5L1800 361.5" stroke="#3d8038" stroke-opacity="0.24" stroke-width="1"/>
<path d="M1715.5 270L1715.5 450" stroke="#3d8038" stroke-opacity="0.24" stroke-width="1"/>
<circle cx="1403" cy="415" r="64" stroke="#1a5a50" stroke-opacity="0.25" stroke-width="3"/>
<rect x="1509.5" y="513.8" width="307.7" height="204.2" fill="none" stroke="#2f7a3a" stroke-opacity="0.525" stroke-width="1.3"/>
<rect x="1512" y="516.3" width="302.7" height="199.2" fill="none" stroke="#2f7a3a" stroke-opacity="0.315" stroke-width="1"/>
<path d="M1510 527.5L1817 527.5" stroke="#2f7a3a" stroke-opacity="0.413" stroke-width="1.4"/>
<path d="M1509 681L1920 681" stroke="#2f7a3a" stroke-opacity="0.3" stroke-width="3"/>
<path d="M1509 718L1920 718" stroke="#2f7a3a" stroke-opacity="0.225" stroke-width="2"/>
<path d="M1509 768.5L1920 768.5" stroke="#2f7a3a" stroke-opacity="0.188" stroke-width="2.5"/>
<path d="M1612.5 514L1612.5 718" stroke="#2f7a3a" stroke-opacity="0.45" stroke-width="1.4"/>
<path d="M1714.5 514L1714.5 718" stroke="#2f7a3a" stroke-opacity="0.375" stroke-width="1.2"/>
<path d="M1751 514L1751 618" stroke="#2f7a3a" stroke-opacity="0.338" stroke-width="1.2"/>
<path d="M1714 618L1817 618" stroke="#2f7a3a" stroke-opacity="0.413" stroke-width="1.4"/>
<rect x="1817" y="514" width="81.5" height="120" fill="none" stroke="#2f7a3a" stroke-opacity="0.3" stroke-width="1.2"/>
<ellipse cx="1538" cy="522" rx="4.500" ry="3.200" stroke="#4a9a3c" stroke-opacity=".7" stroke-width="1.300"/>
<ellipse cx="1563" cy="522" rx="4.500" ry="3.200" stroke="#4a9a3c" stroke-opacity=".7" stroke-width="1.300"/>
<ellipse cx="1760" cy="522" rx="4.500" ry="3.200" stroke="#4a9a3c" stroke-opacity=".7" stroke-width="1.300"/>
<ellipse cx="1784" cy="522" rx="4.500" ry="3.200" stroke="#4a9a3c" stroke-opacity=".7" stroke-width="1.300"/>
<ellipse cx="1803" cy="522" rx="4.500" ry="3.200" stroke="#4a9a3c" stroke-opacity=".7" stroke-width="1.300"/>
<rect x="1512" y="516" width="8" height="8" fill="none" stroke="#4a9a3c" stroke-opacity="0.44" stroke-width="1.1"/>
<rect x="1599" y="516" width="8" height="8" fill="none" stroke="#4a9a3c" stroke-opacity="0.44" stroke-width="1.1"/>
<rect x="1738" y="516" width="8" height="8" fill="none" stroke="#4a9a3c" stroke-opacity="0.44" stroke-width="1.1"/>
<rect x="1819" y="518" width="8" height="8" fill="none" stroke="#4a9a3c" stroke-opacity="0.44" stroke-width="1.1"/>
<rect x="1819" y="527" width="8" height="8" fill="none" stroke="#4a9a3c" stroke-opacity="0.44" stroke-width="1.1"/>
<rect x="1819" y="594" width="8" height="8" fill="none" stroke="#4a9a3c" stroke-opacity="0.44" stroke-width="1.1"/>
<rect x="1819" y="603" width="8" height="8" fill="none" stroke="#4a9a3c" stroke-opacity="0.44" stroke-width="1.1"/>
<rect x="1501" y="527" width="8" height="8" fill="none" stroke="#4a9a3c" stroke-opacity="0.44" stroke-width="1.1"/>
<rect x="1501" y="537" width="8" height="8" fill="none" stroke="#4a9a3c" stroke-opacity="0.44" stroke-width="1.1"/>
<circle cx="1623" cy="525" r="73" stroke="#25583c" stroke-opacity="0.45" stroke-width="3"/>
<circle cx="1623" cy="525" r="66" stroke="#25583c" stroke-opacity="0.225" stroke-width="1"/>
<path d="M1655 521C1652.5 521.5 1644.7 522 1640 524C1635.3 526 1630.3 528.3 1627 533C1623.7 537.7 1622 545.8 1620 552C1618 558.2 1614.8 566.8 1615 570C1615.2 573.2 1620.8 566 1621 571C1621.2 576 1617.3 590.5 1616 600C1614.7 609.5 1613 619.7 1613 628C1613 636.3 1613.8 642.7 1616 650C1618.2 657.3 1622 665 1626 672C1630 679 1635.2 686.5 1640 692C1644.8 697.5 1649.7 702.3 1655 705C1660.3 707.7 1669.2 707.5 1672 708" stroke="#2f7a3a" stroke-opacity="0.525" stroke-width="1.1" fill="none"/>
<path d="M1655 521C1656.2 523.3 1660.2 529.8 1662 535C1663.8 540.2 1665 545.8 1666 552C1667 558.2 1665.7 567.7 1668 572C1670.3 576.3 1675.8 577.8 1680 578C1684.2 578.2 1692 571.7 1693 573C1694 574.3 1688.8 581.8 1686 586C1683.2 590.2 1678.8 593.7 1676 598C1673.2 602.3 1670 608 1669 612C1668 616 1668.2 619.3 1670 622C1671.8 624.7 1676.5 626.7 1680 628C1683.5 629.3 1689.2 629.7 1691 630" stroke="#2f7a3a" stroke-opacity="0.525" stroke-width="1.1" fill="none"/>
<path d="M1650 522C1651 525 1655.7 534.3 1656 540C1656.3 545.7 1654.3 551.8 1652 556C1649.7 560.2 1642.3 566.3 1642 565C1641.7 563.7 1648.7 555.2 1650 548C1651.3 540.8 1650 526.3 1650 522" stroke="#2f7a3a" stroke-opacity="0.45" stroke-width="1" fill="none"/>
<circle cx="1636.7" cy="538.8" r="3.5" stroke="#2f7a3a" stroke-opacity="0.525" stroke-width="1"/>
<circle cx="1636.7" cy="538.8" r="7" stroke="#2f7a3a" stroke-opacity="0.525" stroke-width="1"/>
<circle cx="1636.7" cy="538.8" r="10.5" stroke="#2f7a3a" stroke-opacity="0.525" stroke-width="1"/>
<circle cx="1685.6" cy="673" r="5" stroke="#2f7a3a" stroke-opacity="0.45" stroke-width="1.1"/>
<circle cx="1685.6" cy="673" r="11" stroke="#2f7a3a" stroke-opacity="0.45" stroke-width="1.1"/>
<circle cx="1685.6" cy="673" r="17.5" stroke="#2f7a3a" stroke-opacity="0.45" stroke-width="1.1"/>
<circle cx="1685.6" cy="673" r="24" stroke="#2f7a3a" stroke-opacity="0.45" stroke-width="1.1"/>
<text transform="translate(1731 716) rotate(-90)" font-family="Liberation Sans,DejaVu Sans,sans-serif" font-weight="bold" font-size="40" textLength="196" lengthAdjust="spacingAndGlyphs" stroke="#2f7a3a" stroke-opacity=".7" stroke-width="1.100" fill="none">openSUSE</text>
<rect x="1418.5" y="781" width="103.5" height="103.4" fill="none" stroke="#25583c" stroke-opacity="0.36" stroke-width="1.4"/>
<circle cx="1444.5" cy="514.3" r="4" stroke="#2f7a3a" stroke-opacity="0.338" stroke-width="1"/>
<circle cx="1444.5" cy="616.5" r="4" stroke="#2f7a3a" stroke-opacity="0.338" stroke-width="1"/>
<circle cx="1444.5" cy="718" r="4" stroke="#2f7a3a" stroke-opacity="0.338" stroke-width="1"/>
<circle cx="1444.5" cy="781" r="4" stroke="#2f7a3a" stroke-opacity="0.338" stroke-width="1"/>
<circle cx="1444.5" cy="884" r="4" stroke="#2f7a3a" stroke-opacity="0.338" stroke-width="1"/>
<circle cx="1586" cy="290" r="3.5" stroke="#2f7a3a" stroke-opacity="0.375" stroke-width="1"/>
<circle cx="1586" cy="305" r="3.5" stroke="#2f7a3a" stroke-opacity="0.375" stroke-width="1"/>
<circle cx="1586" cy="362" r="3.5" stroke="#2f7a3a" stroke-opacity="0.375" stroke-width="1"/>
<circle cx="1586" cy="412" r="3.5" stroke="#2f7a3a" stroke-opacity="0.375" stroke-width="1"/>
<circle cx="1586" cy="430" r="3.5" stroke="#2f7a3a" stroke-opacity="0.375" stroke-width="1"/>
<rect x="1563" y="660" width="24" height="40" fill="none" stroke="#2f7a3a" stroke-opacity="0.3" stroke-width="1"/>
<rect x="1554" y="667" width="8" height="6" fill="none" stroke="#2f7a3a" stroke-opacity="0.3" stroke-width="1"/>
<rect x="1554" y="687" width="8" height="6" fill="none" stroke="#2f7a3a" stroke-opacity="0.3" stroke-width="1"/>
<rect x="1588" y="667" width="8" height="6" fill="none" stroke="#2f7a3a" stroke-opacity="0.3" stroke-width="1"/>
<rect x="1588" y="687" width="8" height="6" fill="none" stroke="#2f7a3a" stroke-opacity="0.3" stroke-width="1"/>
<rect x="1570" y="648" width="10" height="8" fill="none" stroke="#2f7a3a" stroke-opacity="0.3" stroke-width="1"/>
<rect x="1570" y="704" width="10" height="8" fill="none" stroke="#2f7a3a" stroke-opacity="0.3" stroke-width="1"/>
<rect x="1563" y="760" width="24" height="40" fill="none" stroke="#2f7a3a" stroke-opacity="0.225" stroke-width="1"/>
<rect x="1554" y="767" width="8" height="6" fill="none" stroke="#2f7a3a" stroke-opacity="0.225" stroke-width="1"/>
<rect x="1554" y="787" width="8" height="6" fill="none" stroke="#2f7a3a" stroke-opacity="0.225" stroke-width="1"/>
<rect x="1588" y="767" width="8" height="6" fill="none" stroke="#2f7a3a" stroke-opacity="0.225" stroke-width="1"/>
<rect x="1588" y="787" width="8" height="6" fill="none" stroke="#2f7a3a" stroke-opacity="0.225" stroke-width="1"/>
<rect x="1570" y="748" width="10" height="8" fill="none" stroke="#2f7a3a" stroke-opacity="0.225" stroke-width="1"/>
<rect x="1570" y="804" width="10" height="8" fill="none" stroke="#2f7a3a" stroke-opacity="0.225" stroke-width="1"/>
<rect x="1563" y="850" width="24" height="40" fill="none" stroke="#2f7a3a" stroke-opacity="0.21" stroke-width="1"/>
<rect x="1554" y="857" width="8" height="6" fill="none" stroke="#2f7a3a" stroke-opacity="0.21" stroke-width="1"/>
<rect x="1554" y="877" width="8" height="6" fill="none" stroke="#2f7a3a" stroke-opacity="0.21" stroke-width="1"/>
<rect x="1588" y="857" width="8" height="6" fill="none" stroke="#2f7a3a" stroke-opacity="0.21" stroke-width="1"/>
<rect x="1588" y="877" width="8" height="6" fill="none" stroke="#2f7a3a" stroke-opacity="0.21" stroke-width="1"/>
<rect x="1570" y="838" width="10" height="8" fill="none" stroke="#2f7a3a" stroke-opacity="0.21" stroke-width="1"/>
<rect x="1570" y="894" width="10" height="8" fill="none" stroke="#2f7a3a" stroke-opacity="0.21" stroke-width="1"/>
<rect x="1628" y="850" width="24" height="40" fill="none" stroke="#2f7a3a" stroke-opacity="0.21" stroke-width="1"/>
<rect x="1619" y="857" width="8" height="6" fill="none" stroke="#2f7a3a" stroke-opacity="0.21" stroke-width="1"/>
<rect x="1619" y="877" width="8" height="6" fill="none" stroke="#2f7a3a" stroke-opacity="0.21" stroke-width="1"/>
<rect x="1653" y="857" width="8" height="6" fill="none" stroke="#2f7a3a" stroke-opacity="0.21" stroke-width="1"/>
<rect x="1653" y="877" width="8" height="6" fill="none" stroke="#2f7a3a" stroke-opacity="0.21" stroke-width="1"/>
<rect x="1635" y="838" width="10" height="8" fill="none" stroke="#2f7a3a" stroke-opacity="0.21" stroke-width="1"/>
<rect x="1635" y="894" width="10" height="8" fill="none" stroke="#2f7a3a" stroke-opacity="0.21" stroke-width="1"/>
<path d="M1520 652L1520 662L1538 652L1538 662Z" stroke="#6f5c34" stroke-opacity="0.279" stroke-width="1" fill="none"/>
<path d="M1520 799L1520 809L1538 799L1538 809Z" stroke="#6f5c34" stroke-opacity="0.279" stroke-width="1" fill="none"/>
<path d="M1520 908L1520 918L1538 908L1538 918Z" stroke="#6f5c34" stroke-opacity="0.279" stroke-width="1" fill="none"/>
<path d="M1817 390L1817 400L1835 390L1835 400Z" stroke="#6f5c34" stroke-opacity="0.279" stroke-width="1" fill="none"/>
<path d="M1837 67L1837 77L1855 67L1855 77Z" stroke="#6f5c34" stroke-opacity="0.279" stroke-width="1" fill="none"/>
<path d="M1837 140L1837 150L1855 140L1855 150Z" stroke="#6f5c34" stroke-opacity="0.279" stroke-width="1" fill="none"/>
<path d="M1674 860L1674 870L1692 860L1692 870Z" stroke="#6f5c34" stroke-opacity="0.279" stroke-width="1" fill="none"/>
<path d="M1809 695L1809 705L1827 695L1827 705Z" stroke="#6f5c34" stroke-opacity="0.279" stroke-width="1" fill="none"/>
<path d="M1484 319L1492 323L1484 327Z" stroke="#6f5c34" stroke-opacity="0.248" stroke-width="1" fill="none"/>
<path d="M1552 319L1560 323L1552 327Z" stroke="#6f5c34" stroke-opacity="0.248" stroke-width="1" fill="none"/>
<path d="M1484 167L1492 171L1484 175Z" stroke="#6f5c34" stroke-opacity="0.248" stroke-width="1" fill="none"/>
<path d="M1552 167L1560 171L1552 175Z" stroke="#6f5c34" stroke-opacity="0.248" stroke-width="1" fill="none"/>
<ellipse cx="1662" cy="37" rx="8" ry="5.500" stroke="#7a6436" stroke-opacity=".6" stroke-width="1.200"/>
<ellipse cx="1662" cy="67" rx="8" ry="5.500" stroke="#7a6436" stroke-opacity=".6" stroke-width="1.200"/>
<ellipse cx="1662" cy="97" rx="8" ry="5.500" stroke="#7a6436" stroke-opacity=".6" stroke-width="1.200"/>
<ellipse cx="1662" cy="128" rx="8" ry="5.500" stroke="#7a6436" stroke-opacity=".6" stroke-width="1.200"/>
<rect x="1870" y="31" width="12" height="14" fill="none" stroke="#6f5c34" stroke-opacity="0.248" stroke-width="1.2"/>
<rect x="1870" y="77" width="12" height="14" fill="none" stroke="#6f5c34" stroke-opacity="0.248" stroke-width="1.2"/>
<rect x="1907" y="560" width="12" height="20" fill="none" stroke="#3d8038" stroke-opacity="0.4" stroke-width="1.2"/>
<rect x="1907" y="592" width="12" height="20" fill="none" stroke="#3d8038" stroke-opacity="0.4" stroke-width="1.2"/>
<rect x="1850" y="176" width="70" height="62" fill="none" stroke="#3d8038" stroke-opacity="0.36" stroke-width="1.4"/>
<rect x="1867" y="178" width="12" height="30" fill="none" stroke="#3d8038" stroke-opacity="0.4" stroke-width="1.2"/>
<path d="M1737.5 391.8L1737.5 635.2" stroke="#3d8038" stroke-opacity="0.109" stroke-width="1"/>
<path d="M1755.5 411.2L1755.5 491.8" stroke="#3d8038" stroke-opacity="0.113" stroke-width="1"/>
<path d="M1795.5 555.1L1795.5 615.8" stroke="#3d8038" stroke-opacity="0.093" stroke-width="1"/>
<path d="M1619.5 566.8L1619.5 759.3" stroke="#3d8038" stroke-opacity="0.068" stroke-width="1"/>
<path d="M1909.5 675.3L1909.5 859.2" stroke="#3d8038" stroke-opacity="0.123" stroke-width="1"/>
<path d="M1641.5 10.5L1641.5 166.7" stroke="#3d8038" stroke-opacity="0.07" stroke-width="1"/>
<path d="M1652.5 169.4L1652.5 216" stroke="#3d8038" stroke-opacity="0.109" stroke-width="1"/>
<path d="M1733.5 589.7L1733.5 743.9" stroke="#3d8038" stroke-opacity="0.125" stroke-width="1"/>
<path d="M1752.5 463.7L1752.5 604.3" stroke="#3d8038" stroke-opacity="0.091" stroke-width="1"/>
<path d="M1914.5 697L1914.5 921.8" stroke="#3d8038" stroke-opacity="0.132" stroke-width="1"/>
<path d="M1692.5 160.8L1692.5 264.4" stroke="#3d8038" stroke-opacity="0.071" stroke-width="1"/>
<path d="M1839.5 280.3L1839.5 506.5" stroke="#3d8038" stroke-opacity="0.101" stroke-width="1"/>
<path d="M1901.5 593.1L1901.5 633.2" stroke="#3d8038" stroke-opacity="0.084" stroke-width="1"/>
<path d="M1886.5 329L1886.5 584.7" stroke="#3d8038" stroke-opacity="0.102" stroke-width="1"/>
<path d="M1614.5 440.6L1614.5 651.9" stroke="#3d8038" stroke-opacity="0.09" stroke-width="1"/>
<path d="M1618.5 232.8L1618.5 484.9" stroke="#3d8038" stroke-opacity="0.137" stroke-width="1"/>
<path d="M1628.5 172.5L1628.5 234.7" stroke="#3d8038" stroke-opacity="0.07" stroke-width="1"/>
<path d="M1849.5 124.4L1849.5 287.4" stroke="#3d8038" stroke-opacity="0.107" stroke-width="1"/>
<path d="M1652.5 512.3L1652.5 581.1" stroke="#3d8038" stroke-opacity="0.126" stroke-width="1"/>
<path d="M1628.5 294.5L1628.5 381.4" stroke="#3d8038" stroke-opacity="0.09" stroke-width="1"/>
<path d="M1906.5 562.4L1906.5 669.3" stroke="#3d8038" stroke-opacity="0.149" stroke-width="1"/>
<path d="M1658.5 276L1658.5 504" stroke="#3d8038" stroke-opacity="0.126" stroke-width="1"/>
<path d="M1623.5 692.5L1623.5 779.4" stroke="#3d8038" stroke-opacity="0.089" stroke-width="1"/>
<path d="M1841.5 230.3L1841.5 335.5" stroke="#3d8038" stroke-opacity="0.071" stroke-width="1"/>
<path d="M1619.5 407.9L1619.5 501.4" stroke="#3d8038" stroke-opacity="0.122" stroke-width="1"/>
<path d="M1711.5 317.2L1711.5 568.3" stroke="#3d8038" stroke-opacity="0.11" stroke-width="1"/>
<path d="M1777.5 606.6L1777.5 686.8" stroke="#3d8038" stroke-opacity="0.079" stroke-width="1"/>
<path d="M1885.5 572.5L1885.5 667.4" stroke="#3d8038" stroke-opacity="0.082" stroke-width="1"/>
<path d="M1830.5 658.3L1830.5 741.5" stroke="#3d8038" stroke-opacity="0.155" stroke-width="1"/>
<path d="M1877.5 422.5L1877.5 555.2" stroke="#3d8038" stroke-opacity="0.074" stroke-width="1"/>
<path d="M1603.5 673.9L1603.5 766.3" stroke="#3d8038" stroke-opacity="0.132" stroke-width="1"/>
<path d="M1674.5 576.6L1674.5 747.8" stroke="#3d8038" stroke-opacity="0.092" stroke-width="1"/>
<path d="M1647.5 504.2L1647.5 559.4" stroke="#3d8038" stroke-opacity="0.086" stroke-width="1"/>
<path d="M1772.5 596.7L1772.5 771.8" stroke="#3d8038" stroke-opacity="0.091" stroke-width="1"/>
<path d="M1888.5 142.8L1888.5 186.4" stroke="#3d8038" stroke-opacity="0.09" stroke-width="1"/>
<path d="M1735.5 42.3L1735.5 121.1" stroke="#3d8038" stroke-opacity="0.099" stroke-width="1"/>
<path d="M1776.5 92.1L1776.5 211.8" stroke="#3d8038" stroke-opacity="0.15" stroke-width="1"/>
<path d="M1909.5 459.9L1909.5 651.9" stroke="#3d8038" stroke-opacity="0.12" stroke-width="1"/>
<path d="M1636.5 24.6L1636.5 68.5" stroke="#3d8038" stroke-opacity="0.151" stroke-width="1"/>
<path d="M1818.5 673.9L1818.5 718.6" stroke="#3d8038" stroke-opacity="0.125" stroke-width="1"/>
<path d="M1747.5 511.3L1747.5 621.5" stroke="#3d8038" stroke-opacity="0.16" stroke-width="1"/>
<path d="M1614.5 382.3L1614.5 584.4" stroke="#3d8038" stroke-opacity="0.15" stroke-width="1"/>
<path d="M1830.5 492.6L1830.5 707.1" stroke="#3d8038" stroke-opacity="0.152" stroke-width="1"/>
<path d="M1704.5 479.6L1704.5 717.8" stroke="#3d8038" stroke-opacity="0.148" stroke-width="1"/>
<path d="M1726.5 553.4L1726.5 783.3" stroke="#3d8038" stroke-opacity="0.119" stroke-width="1"/>
<path d="M1793.5 267.6L1793.5 435.8" stroke="#3d8038" stroke-opacity="0.122" stroke-width="1"/>
<path d="M1691.8 77.5L1920 77.5" stroke="#3d8038" stroke-opacity="0.148" stroke-width="1"/>
<path d="M1616.5 699.5L1850.3 699.5" stroke="#3d8038" stroke-opacity="0.12" stroke-width="1"/>
<path d="M1751.5 423.5L1822.5 423.5" stroke="#3d8038" stroke-opacity="0.136" stroke-width="1"/>
<path d="M1680.4 29.5L1850.6 29.5" stroke="#3d8038" stroke-opacity="0.086" stroke-width="1"/>
<path d="M1649.2 670.5L1852.8 670.5" stroke="#3d8038" stroke-opacity="0.152" stroke-width="1"/>
<path d="M1503.4 246.5L1628.7 246.5" stroke="#3d8038" stroke-opacity="0.129" stroke-width="1"/>
<path d="M1550.9 194.5L1827.3 194.5" stroke="#3d8038" stroke-opacity="0.127" stroke-width="1"/>
<path d="M1767.5 424.5L1899.3 424.5" stroke="#3d8038" stroke-opacity="0.128" stroke-width="1"/>
<path d="M1629.3 191.5L1880.8 191.5" stroke="#3d8038" stroke-opacity="0.152" stroke-width="1"/>
<path d="M1615.3 845.5L1811.1 845.5" stroke="#3d8038" stroke-opacity="0.094" stroke-width="1"/>
<path d="M1648.9 131.5L1908.2 131.5" stroke="#3d8038" stroke-opacity="0.145" stroke-width="1"/>
<path d="M1785 683.5L1904.2 683.5" stroke="#3d8038" stroke-opacity="0.08" stroke-width="1"/>
<path d="M1582.5 433.5L1686.1 433.5" stroke="#3d8038" stroke-opacity="0.104" stroke-width="1"/>
<path d="M1648.2 601.5L1777 601.5" stroke="#3d8038" stroke-opacity="0.145" stroke-width="1"/>
<path d="M1635.7 943.5L1704.4 943.5" stroke="#3d8038" stroke-opacity="0.067" stroke-width="1"/>
<path d="M1512.4 838.5L1739.6 838.5" stroke="#3d8038" stroke-opacity="0.119" stroke-width="1"/>
<path d="M1737.5 297.5L1792.2 297.5" stroke="#3d8038" stroke-opacity="0.077" stroke-width="1"/>
<path d="M1507.4 437.5L1764.8 437.5" stroke="#3d8038" stroke-opacity="0.087" stroke-width="1"/>
<path d="M1514.1 135.5L1721.4 135.5" stroke="#3d8038" stroke-opacity="0.107" stroke-width="1"/>
<path d="M1696.5 605.5L1920 605.5" stroke="#3d8038" stroke-opacity="0.156" stroke-width="1"/>
<path d="M1559.8 657.5L1728.6 657.5" stroke="#3d8038" stroke-opacity="0.081" stroke-width="1"/>
<path d="M1641.7 10.5L1870.2 10.5" stroke="#3d8038" stroke-opacity="0.081" stroke-width="1"/>
<path d="M1603.7 261.5L1828 261.5" stroke="#3d8038" stroke-opacity="0.114" stroke-width="1"/>
<path d="M1726.9 590.5L1875.2 590.5" stroke="#3d8038" stroke-opacity="0.14" stroke-width="1"/>
<path d="M1526.2 870.5L1809.3 870.5" stroke="#3d8038" stroke-opacity="0.133" stroke-width="1"/>
<path d="M1636.1 125.5L1842.4 125.5" stroke="#3d8038" stroke-opacity="0.151" stroke-width="1"/>
<path d="M1670.6 362.5L1920 362.5" stroke="#3d8038" stroke-opacity="0.14" stroke-width="1"/>
<path d="M1639.1 906.5L1851.9 906.5" stroke="#3d8038" stroke-opacity="0.084" stroke-width="1"/>
<path d="M1745.5 693.5L1920 693.5" stroke="#3d8038" stroke-opacity="0.133" stroke-width="1"/>
<path d="M1770 205.5L1920 205.5" stroke="#3d8038" stroke-opacity="0.158" stroke-width="1"/>
<path d="M1737.2 515.5L1867.3 515.5" stroke="#3d8038" stroke-opacity="0.151" stroke-width="1"/>
<path d="M1604.6 822.5L1675.2 822.5" stroke="#3d8038" stroke-opacity="0.106" stroke-width="1"/>
<path d="M1730.5 528.5L1902.3 528.5" stroke="#3d8038" stroke-opacity="0.067" stroke-width="1"/>
<path d="M1519.2 777.5L1769.2 777.5" stroke="#3d8038" stroke-opacity="0.081" stroke-width="1"/>
<path d="M1736.4 322.5L1821.5 322.5" stroke="#3d8038" stroke-opacity="0.078" stroke-width="1"/>
<path d="M1717.1 496.5L1920 496.5" stroke="#3d8038" stroke-opacity="0.13" stroke-width="1"/>
<path d="M1647.8 908.5L1920 908.5" stroke="#3d8038" stroke-opacity="0.072" stroke-width="1"/>
<path d="M1658 213.5L1780.5 213.5" stroke="#3d8038" stroke-opacity="0.134" stroke-width="1"/>
<path d="M1656.8 613.5L1917.7 613.5" stroke="#3d8038" stroke-opacity="0.118" stroke-width="1"/>
<path d="M1614.4 299.5L1875.7 299.5" stroke="#3d8038" stroke-opacity="0.15" stroke-width="1"/>
<path d="M1755.2 200.5L1920 200.5" stroke="#3d8038" stroke-opacity="0.114" stroke-width="1"/>
<path d="M1560.3 550.5L1744.3 550.5" stroke="#3d8038" stroke-opacity="0.112" stroke-width="1"/>
<path d="M1508.3 581.5L1800.7 581.5" stroke="#3d8038" stroke-opacity="0.114" stroke-width="1"/>
<path d="M1740.3 385.5L1920 385.5" stroke="#3d8038" stroke-opacity="0.111" stroke-width="1"/>
<path d="M1519.8 663.5L1704.4 663.5" stroke="#3d8038" stroke-opacity="0.104" stroke-width="1"/>
<path d="M1777 919.5L1894.3 919.5" stroke="#3d8038" stroke-opacity="0.109" stroke-width="1"/>
<path d="M1719.5 173.5L1719.5 344" stroke="#6f5c34" stroke-opacity="0.177" stroke-width="1"/>
<path d="M1797.5 126.9L1797.5 197.5" stroke="#6f5c34" stroke-opacity="0.15" stroke-width="1"/>
<path d="M1898.5 51.8L1898.5 216.5" stroke="#6f5c34" stroke-opacity="0.095" stroke-width="1"/>
<path d="M1734.5 90.9L1734.5 240.8" stroke="#6f5c34" stroke-opacity="0.123" stroke-width="1"/>
<path d="M1770.5 247.9L1770.5 304.7" stroke="#6f5c34" stroke-opacity="0.161" stroke-width="1"/>
<path d="M1718.5 204.2L1718.5 284.3" stroke="#6f5c34" stroke-opacity="0.111" stroke-width="1"/>
<path d="M1809.5 174.7L1809.5 274.8" stroke="#6f5c34" stroke-opacity="0.131" stroke-width="1"/>
<path d="M1809.5 63.9L1809.5 136.6" stroke="#6f5c34" stroke-opacity="0.152" stroke-width="1"/>
<path d="M1834.5 211.8L1834.5 388" stroke="#6f5c34" stroke-opacity="0.15" stroke-width="1"/>
<path d="M1883.5 93.1L1883.5 251.6" stroke="#6f5c34" stroke-opacity="0.168" stroke-width="1"/>
<path d="M1893.5 126.3L1893.5 216.7" stroke="#6f5c34" stroke-opacity="0.179" stroke-width="1"/>
<path d="M1739.5 399.3L1739.5 581.3" stroke="#6f5c34" stroke-opacity="0.105" stroke-width="1"/>
<path d="M1744.5 290.6L1744.5 372.2" stroke="#6f5c34" stroke-opacity="0.102" stroke-width="1"/>
<path d="M1877.5 168.7L1877.5 335" stroke="#6f5c34" stroke-opacity="0.105" stroke-width="1"/>
<path d="M1799.6 201.5L1841.8 201.5" stroke="#6f5c34" stroke-opacity="0.112" stroke-width="1"/>
<path d="M1835.8 341.5L1920 341.5" stroke="#6f5c34" stroke-opacity="0.104" stroke-width="1"/>
<path d="M1811.3 253.5L1911.6 253.5" stroke="#6f5c34" stroke-opacity="0.157" stroke-width="1"/>
<path d="M1701.3 95.5L1754 95.5" stroke="#6f5c34" stroke-opacity="0.096" stroke-width="1"/>
<path d="M1772.4 276.5L1880.6 276.5" stroke="#6f5c34" stroke-opacity="0.107" stroke-width="1"/>
<path d="M1722.6 92.5L1863.5 92.5" stroke="#6f5c34" stroke-opacity="0.185" stroke-width="1"/>
<path d="M1705.2 463.5L1752.7 463.5" stroke="#6f5c34" stroke-opacity="0.181" stroke-width="1"/>
<path d="M1812.4 231.5L1891.6 231.5" stroke="#6f5c34" stroke-opacity="0.136" stroke-width="1"/>
<path d="M1758.8 258.5L1870.9 258.5" stroke="#6f5c34" stroke-opacity="0.094" stroke-width="1"/>
<path d="M1825.1 351.5L1886.8 351.5" stroke="#6f5c34" stroke-opacity="0.135" stroke-width="1"/>
<path d="M1754.8 370.5L1818.3 370.5" stroke="#6f5c34" stroke-opacity="0.108" stroke-width="1"/>
<path d="M1692.5 256.5L1839.6 256.5" stroke="#6f5c34" stroke-opacity="0.168" stroke-width="1"/>
<path d="M1690 82L1920 250" stroke="#3d8038" stroke-opacity="0.16" stroke-width="1"/>
<path d="M1700 190L1900 20" stroke="#3d8038" stroke-opacity="0.176" stroke-width="1"/>
<path d="M1740 250L1920 110" stroke="#3d8038" stroke-opacity="0.144" stroke-width="1"/>
<path d="M1600 330L1900 60" stroke="#3d8038" stroke-opacity="0.112" stroke-width="1"/>
<path d="M1780 0L1700 82" stroke="#3d8038" stroke-opacity="0.16" stroke-width="1"/>
<path d="M1850 0L1700 150" stroke="#3d8038" stroke-opacity="0.12" stroke-width="1"/>
</svg>
<svg class="a" style="left:46px;top:28px" width="54" height="44" viewBox="0 0 54 44">
<defs><linearGradient id="fg" x1="0" y1="0" x2="0" y2="1"><stop offset="0" stop-color="#f1dfc1"/><stop offset="1" stop-color="#e2c590"/></linearGradient>
<linearGradient id="fp" x1="0" y1="0" x2="0" y2="1"><stop offset="0" stop-color="#ffffff"/><stop offset="1" stop-color="#ececec"/></linearGradient></defs>
<path d="M8 4.200h16v2.800h24.200v6H6.200V7H8z" fill="url(#fp)"/>
<rect x="5.200" y="10.600" width="44.200" height="29" rx=".8" fill="url(#fg)" stroke="#b8995c" stroke-width=".9"/>
<path d="M4.900 11h44.400" stroke="#f8ecd6" stroke-width=".8"/>
<path d="M27 19.600l7.800 7.400h-2.300v5.700h-3.700v-4.200h-3.600v4.200h-3.700V27h-2.300z" fill="#b9a06a"/>
<rect x="30.400" y="20" width="1.700" height="2.600" fill="#b9a06a"/>
</svg>
<div class="dl" style="left:-5.500px;top:79px;letter-spacing:.25px">Home</div>
<svg class="a" style="left:46px;top:132px" width="54" height="42" viewBox="0 0 54 42">
<defs><linearGradient id="hg" x1="0" y1="0" x2="0" y2="1"><stop offset="0" stop-color="#dedede"/><stop offset="1" stop-color="#c9c9c9"/></linearGradient>
<linearGradient id="hf" x1="0" y1="0" x2="1" y2="0"><stop offset="0" stop-color="#bdbdbd"/><stop offset=".12" stop-color="#6e6e6e"/><stop offset=".5" stop-color="#9c9c9c"/><stop offset="1" stop-color="#8a8a8a"/></linearGradient></defs>
<path d="M11.600 3.600h30.800a1.400 1.400 0 0 1 1.300.9L50 31.800H4L10.300 4.500a1.400 1.400 0 0 1 1.300-.9z" fill="url(#hg)" stroke="#b5b5b5" stroke-width=".5"/>
<ellipse cx="27.600" cy="20.600" rx="16.400" ry="9.600" fill="#d6d6d6" stroke="#b9b9b9" stroke-width=".7"/>
<ellipse cx="27.600" cy="20.600" rx="5.800" ry="3" fill="#dadada" stroke="#b4b4b4" stroke-width=".7"/>
<path d="M14 16c2.400-4.400 9-5.400 12.600-9.600" fill="none" stroke="#e6e6e6" stroke-width="1.300"/>
<path d="M4 31.800h46v5.200a1 1 0 0 1-1 1H5a1 1 0 0 1-1-1z" fill="url(#hf)"/>
<rect x="10.600" y="33" width="37" height="3.200" fill="#5a5a5a" opacity=".55"/>
<path d="M4 31.800h46" stroke="#efefef" stroke-width=".9"/>
</svg>
<div class="dl" style="left:-7.500px;top:183px;letter-spacing:-.3px">File System</div>
<svg class="a" style="left:54px;top:232px" width="38" height="48" viewBox="0 0 38 48">
<defs><linearGradient id="tg" x1="0" y1="0" x2="1" y2="0"><stop offset="0" stop-color="#8f8f94"/><stop offset=".1" stop-color="#c3c3c6"/><stop offset=".3" stop-color="#9a9a9e"/><stop offset=".36" stop-color="#d6d6d8"/><stop offset=".52" stop-color="#e2e2e4"/><stop offset=".58" stop-color="#a0a0a4"/><stop offset=".7" stop-color="#cfcfd2"/><stop offset=".86" stop-color="#a8a8ac"/><stop offset="1" stop-color="#8a8a8f"/></linearGradient>
<linearGradient id="tl" x1="0" y1="0" x2="0" y2="1"><stop offset="0" stop-color="#d4d4d6"/><stop offset=".5" stop-color="#f0f0f1"/><stop offset="1" stop-color="#b6b6b9"/></linearGradient></defs>
<path d="M4.400 10h29.200v28.600c0 3.400-6.500 6-14.600 6s-14.600-2.600-14.600-6z" fill="url(#tg)"/>
<path d="M4.400 10c0 3 6.500 5.200 14.600 5.200s14.600-2.200 14.600-5.200" fill="none" stroke="#77777b" stroke-width=".8"/>
<ellipse cx="19" cy="8.600" rx="15.200" ry="5.400" fill="url(#tl)" stroke="#b2b2b5" stroke-width=".5"/>
<path d="M14.800 8.200V4h8.400v4.200h-1.700V5.600h-5v2.600z" fill="#ededee" stroke="#a4a4a8" stroke-width=".5"/>
</svg>
<div class="dl" style="left:-8px;top:287px">Trash</div>

<div id="frame"></div>
<svg class="a" style="left:682px;top:162px" width="556" height="24" viewBox="0 0 556 24">
<path d="M18.2 10.2 L22 13.4 L25.8 10.2" fill="none" stroke="#9a9a9a" stroke-width="1.7" stroke-linecap="round" stroke-linejoin="round"/>
<rect x="474" y="8" width="8" height="3.2" rx=".8" fill="#a2a2a2"/><circle cx="480.3" cy="9.6" r=".8" fill="#2e2e2e"/>
<path d="M478 11.6l3.6 3h-2.2v2h-2.8v-2h-2.2z" fill="#a2a2a2"/>
<path d="M503.5 9h5.5v5.5zM503 10.5l4.5 4.5h-4.5z" fill="#a2a2a2"/>
<circle cx="534" cy="12" r="7.2" fill="#5fb09c"/>
<path d="M531.2 9.2l5.6 5.6m0-5.6l-5.6 5.6" stroke="#2e2e2e" stroke-width="1.5" stroke-linecap="round"/>
</svg>
<div id="wtitle">Notifications</div>
<div id="content"></div>
<!-- header -->
<svg class="a" style="left:688px;top:190px" width="54" height="50" viewBox="0 0 54 50">
<defs><linearGradient id="ng" x1="0" y1="0" x2="0" y2="1"><stop offset="0" stop-color="#4db4e6"/><stop offset="1" stop-color="#2f7fe0"/></linearGradient>
<radialGradient id="nb" cx=".5" cy=".5" r=".7"><stop offset="0" stop-color="#222"/><stop offset="1" stop-color="#060606"/></radialGradient></defs>
<path d="M8 12h25.2l3.3-7.6 3.3 7.6h6.2a4 4 0 0 1 4 4v23a4 4 0 0 1-4 4H8a4 4 0 0 1-4-4V16a4 4 0 0 1 4-4z" fill="#000" opacity=".18" transform="translate(0 1.3)"/>
<path d="M8 12h25.2l3.3-7.6 3.3 7.6h6.2a4 4 0 0 1 4 4v23a4 4 0 0 1-4 4H8a4 4 0 0 1-4-4V16a4 4 0 0 1 4-4z" fill="url(#nb)" stroke="#2c2c2c" stroke-width="1"/>
<circle cx="15.9" cy="27" r="8" fill="url(#ng)" stroke="#6cc0ee" stroke-width=".6"/>
<text x="15.9" y="32" text-anchor="middle" font-family="Liberation Serif,DejaVu Serif,serif" font-style="italic" font-weight="bold" font-size="14" fill="#fff">i</text>
<g fill="#f2f2f2"><rect x="27.8" y="22" width="4.2" height="1.4"/><rect x="33.8" y="22" width="2.2" height="1.4"/><rect x="38" y="22" width="8" height="1.4"/>
<rect x="27.8" y="28" width="2.2" height="1.4"/><rect x="31.8" y="28" width="2.2" height="1.4"/><rect x="36" y="28" width="6" height="1.4"/><rect x="44" y="28" width="2" height="1.4"/>
<rect x="27.8" y="32" width="4.2" height="1.4"/><rect x="33.8" y="32" width="2.2" height="1.4"/><rect x="38" y="32" width="8" height="1.4"/></g>
</svg>
<div class="t" style="left:751px;top:195px;font-weight:bold;font-size:17.3px;letter-spacing:-.75px;line-height:22px;height:22px;color:#222">Notifications</div>
<div class="t" style="left:751px;top:220px">Customize your notification settings</div>
<div class="sep" style="left:685px;top:246px;width:550px"></div>
<!-- tabs -->
<div class="btn" style="left:828px;top:279px;width:264px;height:34px"></div>
<div class="a" style="left:828px;top:279px;width:88px;height:34px;background:#5aa896;border:1px solid #a9b5b1;border-right:0;border-radius:3px 0 0 3px;box-shadow:inset 0 1px 0 #52a490"></div>
<div class="a" style="left:1032px;top:280px;width:1px;height:32px;background:#bcbcbc"></div>
<div class="t" style="left:845px;top:287px;color:#fff">General</div>
<div class="t" style="left:932px;top:287px">Applications</div>
<div class="t" style="left:1049.5px;top:287px">Log</div>
<!-- Behavior -->
<div class="t b" style="left:705px;top:328px">Behavior</div>
<div class="t" style="left:717px;top:355px">Do not disturb</div>
<div class="sw" style="left:1164px;top:354px"><div class="k"></div><svg width="50" height="20"><path d="M37 7.3l5.4 5.4m0-5.4l-5.4 5.4" stroke="#8a8a8a" stroke-width="1.5"/></svg></div>
<div class="t" style="left:717px;top:390px">Show notifications on</div>
<div class="btn" style="left:966px;top:382px;width:249px;height:33px"></div>
<div class="t" style="left:977px;top:390px">display with mouse pointer</div>
<div class="arr" style="left:1192.5px;top:396.5px"></div>
<!-- Appearance -->
<div class="t b" style="left:705px;top:436px">Appearance</div>
<div class="t" style="left:717px;top:468px">Theme</div>
<div class="btn" style="left:966px;top:460px;width:249px;height:33px"></div>
<div class="t" style="left:977px;top:468px">Default</div>
<div class="arr" style="left:1192.5px;top:474.5px"></div>
<div class="t" style="left:717px;top:507px">Default position</div>
<div class="btn" style="left:966px;top:499px;width:249px;height:33px"></div>
<div class="t" style="left:977px;top:507px">Bottom right</div>
<div class="arr" style="left:1192.5px;top:513.5px"></div>
<div class="t" style="left:717px;top:540px">Opacity</div>
<div class="a" style="left:969px;top:546px;width:207px;height:5px;border-radius:3px;background:#c4c4c4"></div>
<div class="a" style="left:969px;top:546px;width:188px;height:5px;border-radius:3px;background:#5aa896"></div>
<div class="a" style="left:1147px;top:540px;width:17px;height:17px;border-radius:9px;background:#f6f6f6;border:1px solid #b4b4b4"></div>
<div class="t" style="left:1179px;top:540px;color:#a2a2a2;font-family:'Liberation Sans','DejaVu Sans',sans-serif;font-size:14px">92%</div>
<div class="t" style="left:717px;top:573px">Disappear after</div>
<div class="btn" style="left:1032px;top:565px;width:121px;height:34px"></div>
<div class="a" style="left:1033px;top:566px;width:46px;height:32px;background:#fff;border-radius:2px 0 0 2px"></div>
<div class="a" style="left:1079px;top:566px;width:1px;height:32px;background:#c8c8c8"></div>
<div class="a" style="left:1116px;top:566px;width:1px;height:32px;background:#c8c8c8"></div>
<div class="t" style="left:1045.5px;top:573px">10</div>
<div class="a" style="left:1092px;top:581px;width:11px;height:2px;background:#2b2b2b"></div>
<div class="a" style="left:1129px;top:581px;width:11px;height:2px;background:#2b2b2b"></div>
<div class="a" style="left:1133.5px;top:576.5px;width:2px;height:11px;background:#2b2b2b"></div>
<div class="t" style="left:1159px;top:573px">seconds</div>
<!-- Animations -->
<div class="t b" style="left:705px;top:620px">Animations</div>
<div class="t" style="left:717px;top:647px">Fade out</div>
<div class="sw on" style="left:1164px;top:646px"><div class="k"></div><svg width="50" height="20"><path d="M6.3 10.2l2.3 2.4 4.9-5" fill="none" stroke="#fff" stroke-width="1.7"/></svg></div>
<div class="t" style="left:717px;top:677px">Slide out</div>
<div class="sw" style="left:1164px;top:676px"><div class="k"></div><svg width="50" height="20"><path d="M37 7.3l5.4 5.4m0-5.4l-5.4 5.4" stroke="#8a8a8a" stroke-width="1.5"/></svg></div>
<div class="btn" style="left:966px;top:710px;width:249px;height:34px"></div>
<div class="t" style="left:966px;top:718px;width:249px;text-align:center">Show Preview</div>
<div class="btn" style="left:693px;top:770px;width:85px;height:34px"></div>
<div class="t" style="left:693px;top:778px;width:85px;text-align:center">Help</div>
<div class="btn" style="left:1142px;top:770px;width:85px;height:34px"></div>
<div class="t" style="left:1142px;top:778px;width:85px;text-align:center">Close</div>

<div id="pop"></div>
<div class="t b" style="left:1728px;top:820px;color:#1e1e1e">Do not disturb</div>
<div class="sw" style="left:1864px;top:818px"><div class="k"></div><svg width="50" height="20"><path d="M37 7.300l5.400 5.400m0-5.400l-5.400 5.400" stroke="#8a8a8a" stroke-width="1.500"/></svg></div>
<div class="a" style="left:1699px;top:847px;width:221px;height:1px;background:#dcdcdc"></div>
<div class="t" style="left:1699px;top:867px;width:221px;text-align:center;color:#b4b4b4">No notifications</div>
<div class="a" style="left:1699px;top:903px;width:221px;height:1px;background:#dcdcdc"></div>
<div class="t" style="left:1728px;top:913px">Clear log</div>
<div class="t" style="left:1728px;top:944px">Notification settings...</div>

<div id="panel"></div>
<div class="a" style="left:0;top:972px;width:1920px;height:1px;background:#474747"></div>
<svg class="a" style="left:0;top:973px" width="24" height="25" viewBox="0 0 24 25">
<circle cx="11.6" cy="12.5" r="10" fill="#3b3b3b" stroke="#f4f4f4" stroke-width="1.3"/>
<path d="M5.2 6.6c3.2-.6 8.6-.2 11.2 2.2 2 1.8 2.9 4.6 2.6 6.6-1.6 2.4-5 3.3-8 3.4-2.6.1-4.800-.2-6.300-.8C2.600 16.400 1.800 14.400 1.800 12.400c0-2.300.900-4.300 2.400-5.800z" fill="#f7f7f7"/>
<circle cx="14" cy="11" r="2.600" fill="none" stroke="#4a4a4a" stroke-width=".8"/>
<circle cx="14.300" cy="10.700" r=".8" fill="#4a4a4a"/>
<path d="M8.200 12.800c1.800 2.600 6.200 3.600 10.200 2.600" fill="none" stroke="#4a4a4a" stroke-width=".9"/>
</svg>
<div class="t" style="left:28px;top:977px;color:#dcdcdc">Applications</div>
<svg class="a" style="left:129px;top:978px" width="18" height="16" viewBox="0 0 18 16">
<defs><linearGradient id="sd" x1="0" y1="0" x2="0" y2="1"><stop offset="0" stop-color="#7fa0c8"/><stop offset="1" stop-color="#4f74a2"/></linearGradient></defs>
<rect x="1.200" y="1.400" width="14.800" height="12.400" rx="1" fill="url(#sd)" stroke="#2f4a6c" stroke-width=".6"/>
<rect x="1.200" y="1.400" width="14.800" height="2.600" fill="#23303f"/>
<rect x="4" y="9.600" width="9.200" height="4.200" fill="#2d4260"/>
</svg>
<div class="a" style="left:158px;top:973px;width:200px;height:25px;background:#5aa896"></div>
<svg class="a" style="left:162px;top:976px" width="18" height="17" viewBox="0 0 18 17">
<path d="M3 4.200h8.300l1.200-2.800 1.200 2.800h1.800a1.500 1.500 0 0 1 1.500 1.500v8.600a1.500 1.500 0 0 1-1.500 1.500H3a1.500 1.500 0 0 1-1.500-1.500V5.700A1.500 1.500 0 0 1 3 4.200z" fill="#0b0b0b"/>
<circle cx="5.600" cy="10" r="2.900" fill="#3b8fe6"/><rect x="5.200" y="8.300" width=".9" height="3.400" fill="#fff"/>
<g fill="#f0f0f0"><rect x="9.800" y="7.600" width="1.800" height="1.100"/><rect x="12.400" y="7.600" width="3" height="1.100"/><rect x="9.800" y="9.800" width="1.200" height="1.100"/><rect x="11.800" y="9.800" width="3.600" height="1.100"/><rect x="9.800" y="12" width="1.800" height="1.100"/><rect x="12.400" y="12" width="3" height="1.100"/></g>
</svg>
<div class="t" style="left:185px;top:977px;color:#fff">Notifications</div>
<!-- right side -->
<div class="a" style="left:1646px;top:974px;width:46px;height:23px;background:#4a7268"></div>
<div class="a" style="left:1662px;top:978px;width:13px;height:15px;background:#84ccbc;border:1px solid #fff"></div>
<div class="a" style="left:1693px;top:974px;width:47px;height:23px;background:#252525"></div>
<svg class="a" style="left:1742px;top:976px" width="20" height="20" viewBox="0 0 20 20">
<path d="M3 7.800h2.600L9 4.600v10.800L5.600 12.200H3z" fill="#e8e8e8"/>
<path d="M10.600 7.600a3.400 3.400 0 0 1 0 4.800" fill="none" stroke="#e0e0e0" stroke-width="1.300"/>
<path d="M12.600 5.800a6 6 0 0 1 0 8.400" fill="none" stroke="#bdbdbd" stroke-width="1.200"/>
<path d="M14.600 4a8.600 8.600 0 0 1 0 12" fill="none" stroke="#858585" stroke-width="1.100"/>
</svg>
<svg class="a" style="left:1770px;top:976px" width="16" height="20" viewBox="0 0 16 20">
<rect x="5.800" y="1.800" width="4.400" height="2.200" fill="none" stroke="#d8d8d8" stroke-width="1"/>
<rect x="3.300" y="3.800" width="9.400" height="13.900" rx="1" fill="#3b3b3b" stroke="#d8d8d8" stroke-width="1.100"/>
<rect x="4.900" y="5.600" width="6.200" height="10.400" fill="#6fd00f"/>
</svg>
<svg class="a" style="left:1792px;top:976px" width="22" height="21" viewBox="0 0 22 21">
<path d="M7 2l5.200 5.400H9.400v6.400H4.600V7.400H1.800z" fill="#f2f2f2" stroke="#2a2a2a" stroke-width=".5"/>
<path d="M15 19l5.200-5.400h-2.800V7.200h-4.800v6.400H9.800z" fill="#f2f2f2" stroke="#2a2a2a" stroke-width=".5"/>
</svg>
<div class="t" style="left:1833px;top:977px;color:#dcdcdc;font-family:'Liberation Sans','DejaVu Sans',sans-serif;font-size:14px;letter-spacing:.2px">09:40</div>
<div class="a" style="left:1884px;top:973px;width:36px;height:25px;background:#5aa896"></div>
<svg class="a" style="left:1892px;top:975px" width="20" height="20" viewBox="0 0 20 20">
<path d="M10 2.600c.7 0 1.100.4 1.200 1 2 .6 3 2.400 3.100 4.600.1 2.600.5 4.200 1.900 5.500v1H3.800v-1c1.400-1.300 1.800-2.900 1.900-5.500.1-2.200 1.100-4 3.100-4.600.1-.6.500-1 1.200-1z" fill="#fff"/>
<path d="M8.200 15.700h3.600c-.2.900-.9 1.500-1.800 1.500s-1.600-.6-1.800-1.500z" fill="#fff"/>
</svg>

</body>
</html>
